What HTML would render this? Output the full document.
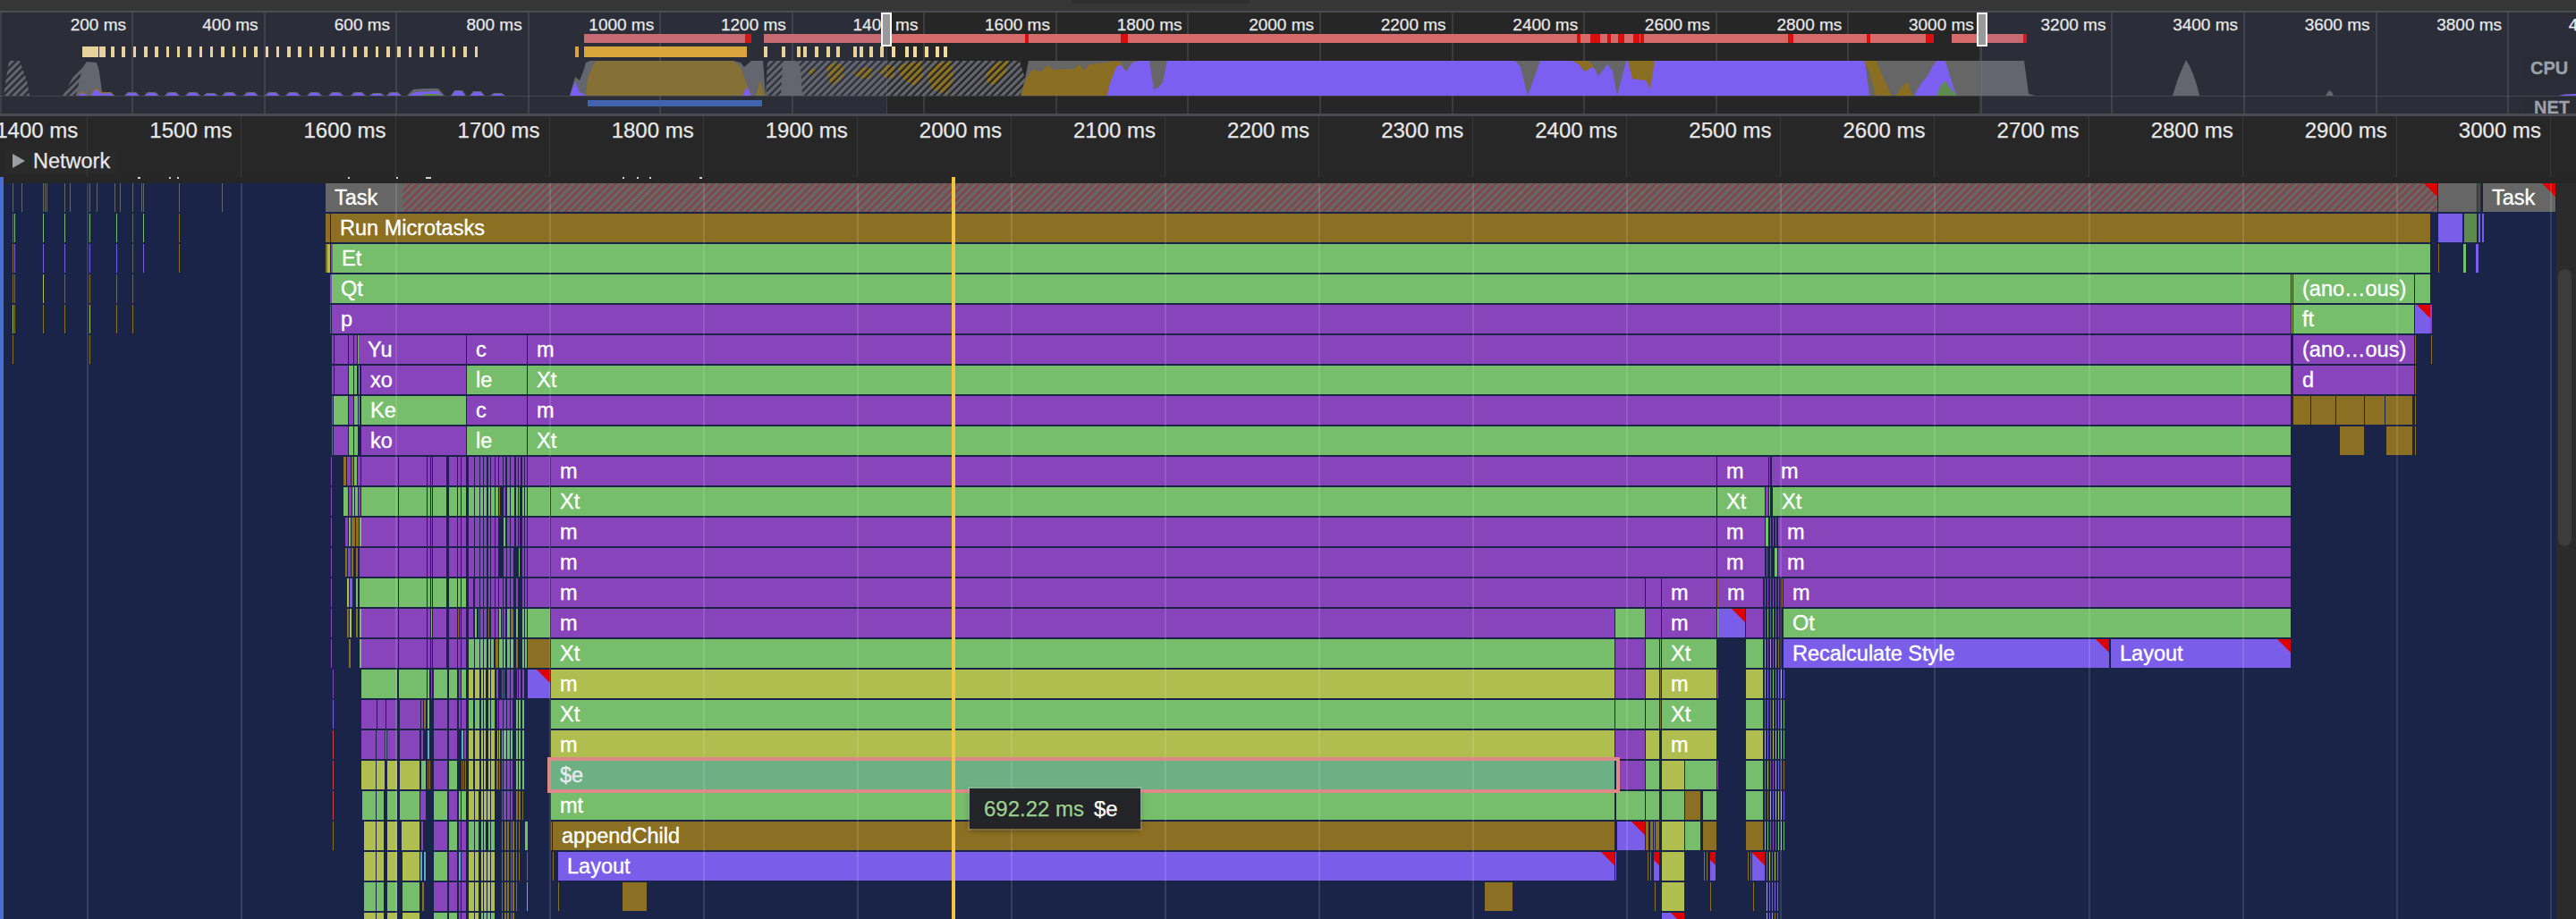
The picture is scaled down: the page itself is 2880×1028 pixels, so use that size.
<!DOCTYPE html>
<html><head><meta charset="utf-8"><style>
html,body{margin:0;padding:0}
body{width:2880px;height:1028px;overflow:hidden;position:relative;background:#192448;font-family:"Liberation Sans",sans-serif}
body>div{position:absolute}
.t{white-space:nowrap;-webkit-text-stroke:0.25px currentColor}
.b{height:32px;overflow:hidden;white-space:nowrap;color:#fff;font-size:23.5px;line-height:32px;box-sizing:border-box}
.l{padding-left:10px;-webkit-text-stroke:0.35px #fff}
.r::after{content:"";position:absolute;right:0;top:0;border-top:15px solid #dd0000;border-left:15px solid transparent}
</style></head><body>
<div style="left:0px;top:0px;width:2880px;height:12px;background:#363636;"></div>
<div style="left:1198px;top:0px;width:199px;height:4px;background:#2f2f2f;border-radius:0 0 5px 5px"></div>
<div style="left:0px;top:12px;width:2880px;height:2px;background:#4b4d52;"></div>
<div style="left:0px;top:14px;width:2880px;height:113px;background:#2b2e38;"></div>
<div style="left:991px;top:14px;width:1224px;height:113px;background:#262626;"></div>
<div style="left:0px;top:14px;width:2px;height:113px;background:#3d4049;"></div>
<div style="left:0px;top:106.5px;width:2880px;height:1.5px;background:rgba(255,255,255,0.11);"></div>
<div style="left:146.5px;top:14px;width:2px;height:113px;background:rgba(255,255,255,0.10);"></div>
<div class="t" style="right:2739.0px;top:16px;font-size:19px;line-height:24px;color:#e8e8e8">200 ms</div>
<div style="left:294.5px;top:14px;width:2px;height:113px;background:rgba(255,255,255,0.10);"></div>
<div class="t" style="right:2591.4px;top:16px;font-size:19px;line-height:24px;color:#e8e8e8">400 ms</div>
<div style="left:441.5px;top:14px;width:2px;height:113px;background:rgba(255,255,255,0.10);"></div>
<div class="t" style="right:2443.9px;top:16px;font-size:19px;line-height:24px;color:#e8e8e8">600 ms</div>
<div style="left:589.5px;top:14px;width:2px;height:113px;background:rgba(255,255,255,0.10);"></div>
<div class="t" style="right:2296.3px;top:16px;font-size:19px;line-height:24px;color:#e8e8e8">800 ms</div>
<div style="left:736.5px;top:14px;width:2px;height:113px;background:rgba(255,255,255,0.10);"></div>
<div class="t" style="right:2148.8px;top:16px;font-size:19px;line-height:24px;color:#e8e8e8">1000 ms</div>
<div style="left:884.5px;top:14px;width:2px;height:113px;background:rgba(255,255,255,0.10);"></div>
<div class="t" style="right:2001.2px;top:16px;font-size:19px;line-height:24px;color:#e8e8e8">1200 ms</div>
<div style="left:1031.5px;top:14px;width:2px;height:113px;background:rgba(255,255,255,0.10);"></div>
<div class="t" style="right:1853.6px;top:16px;font-size:19px;line-height:24px;color:#e8e8e8">1400 ms</div>
<div style="left:1179.5px;top:14px;width:2px;height:113px;background:rgba(255,255,255,0.10);"></div>
<div class="t" style="right:1706.1px;top:16px;font-size:19px;line-height:24px;color:#e8e8e8">1600 ms</div>
<div style="left:1326.5px;top:14px;width:2px;height:113px;background:rgba(255,255,255,0.10);"></div>
<div class="t" style="right:1558.5px;top:16px;font-size:19px;line-height:24px;color:#e8e8e8">1800 ms</div>
<div style="left:1474.5px;top:14px;width:2px;height:113px;background:rgba(255,255,255,0.10);"></div>
<div class="t" style="right:1411.0px;top:16px;font-size:19px;line-height:24px;color:#e8e8e8">2000 ms</div>
<div style="left:1622.5px;top:14px;width:2px;height:113px;background:rgba(255,255,255,0.10);"></div>
<div class="t" style="right:1263.4px;top:16px;font-size:19px;line-height:24px;color:#e8e8e8">2200 ms</div>
<div style="left:1769.5px;top:14px;width:2px;height:113px;background:rgba(255,255,255,0.10);"></div>
<div class="t" style="right:1115.8px;top:16px;font-size:19px;line-height:24px;color:#e8e8e8">2400 ms</div>
<div style="left:1917.5px;top:14px;width:2px;height:113px;background:rgba(255,255,255,0.10);"></div>
<div class="t" style="right:968.3px;top:16px;font-size:19px;line-height:24px;color:#e8e8e8">2600 ms</div>
<div style="left:2064.5px;top:14px;width:2px;height:113px;background:rgba(255,255,255,0.10);"></div>
<div class="t" style="right:820.7px;top:16px;font-size:19px;line-height:24px;color:#e8e8e8">2800 ms</div>
<div style="left:2212.5px;top:14px;width:2px;height:113px;background:rgba(255,255,255,0.10);"></div>
<div class="t" style="right:673.2px;top:16px;font-size:19px;line-height:24px;color:#e8e8e8">3000 ms</div>
<div style="left:2359.5px;top:14px;width:2px;height:113px;background:rgba(255,255,255,0.10);"></div>
<div class="t" style="right:525.6px;top:16px;font-size:19px;line-height:24px;color:#e8e8e8">3200 ms</div>
<div style="left:2507.5px;top:14px;width:2px;height:113px;background:rgba(255,255,255,0.10);"></div>
<div class="t" style="right:378.0px;top:16px;font-size:19px;line-height:24px;color:#e8e8e8">3400 ms</div>
<div style="left:2655.5px;top:14px;width:2px;height:113px;background:rgba(255,255,255,0.10);"></div>
<div class="t" style="right:230.5px;top:16px;font-size:19px;line-height:24px;color:#e8e8e8">3600 ms</div>
<div style="left:2802.5px;top:14px;width:2px;height:113px;background:rgba(255,255,255,0.10);"></div>
<div class="t" style="right:82.9px;top:16px;font-size:19px;line-height:24px;color:#e8e8e8">3800 ms</div>
<div style="left:2950.5px;top:14px;width:2px;height:113px;background:rgba(255,255,255,0.10);"></div>
<div class="t" style="right:-64.6px;top:16px;font-size:19px;line-height:24px;color:#e8e8e8">4000 ms</div>
<div style="left:653px;top:38px;width:180px;height:10px;background:#c76b73;"></div>
<div style="left:833px;top:38px;width:7px;height:10px;background:#d01919;"></div>
<div style="left:854px;top:38px;width:137px;height:10px;background:#c76b73;"></div>
<div style="left:991px;top:38px;width:1170px;height:10px;background:#d46a6a;"></div>
<div style="left:1146px;top:38px;width:4px;height:10px;background:#d70f0f;"></div>
<div style="left:1253px;top:38px;width:8px;height:10px;background:#d70f0f;"></div>
<div style="left:1763px;top:38px;width:4px;height:10px;background:#d70f0f;"></div>
<div style="left:1778px;top:38px;width:11px;height:10px;background:#d70f0f;"></div>
<div style="left:1797px;top:38px;width:4px;height:10px;background:#d70f0f;"></div>
<div style="left:1809px;top:38px;width:7px;height:10px;background:#d70f0f;"></div>
<div style="left:1826px;top:38px;width:7px;height:10px;background:#d70f0f;"></div>
<div style="left:1834px;top:38px;width:4px;height:10px;background:#d70f0f;"></div>
<div style="left:1999px;top:38px;width:6px;height:10px;background:#d70f0f;"></div>
<div style="left:2087px;top:38px;width:4px;height:10px;background:#d70f0f;"></div>
<div style="left:2153px;top:38px;width:9px;height:10px;background:#d70f0f;"></div>
<div style="left:2182px;top:38px;width:33px;height:10px;background:#d46a6a;"></div>
<div style="left:2215px;top:38px;width:47px;height:10px;background:#c76b73;"></div>
<div style="left:2262px;top:38px;width:4px;height:10px;background:#d01919;"></div>
<div style="left:92px;top:52px;width:18px;height:12px;background:#e8d29c;"></div>
<div style="left:111px;top:52px;width:6.6px;height:12px;background:#e8d29c;"></div>
<div style="left:124.0px;top:52px;width:3.6px;height:12px;background:#e8d29c;"></div>
<div style="left:136.3px;top:52px;width:3.6px;height:12px;background:#e8d29c;"></div>
<div style="left:148.6px;top:52px;width:3.6px;height:12px;background:#e8d29c;"></div>
<div style="left:161.0px;top:52px;width:3.6px;height:12px;background:#e8d29c;"></div>
<div style="left:173.3px;top:52px;width:3.6px;height:12px;background:#e8d29c;"></div>
<div style="left:185.6px;top:52px;width:3.6px;height:12px;background:#e8d29c;"></div>
<div style="left:197.9px;top:52px;width:3.6px;height:12px;background:#e8d29c;"></div>
<div style="left:210.2px;top:52px;width:3.6px;height:12px;background:#e8d29c;"></div>
<div style="left:222.6px;top:52px;width:3.6px;height:12px;background:#e8d29c;"></div>
<div style="left:234.9px;top:52px;width:3.6px;height:12px;background:#e8d29c;"></div>
<div style="left:247.2px;top:52px;width:3.6px;height:12px;background:#e8d29c;"></div>
<div style="left:259.5px;top:52px;width:3.6px;height:12px;background:#e8d29c;"></div>
<div style="left:271.8px;top:52px;width:3.6px;height:12px;background:#e8d29c;"></div>
<div style="left:284.2px;top:52px;width:3.6px;height:12px;background:#e8d29c;"></div>
<div style="left:296.5px;top:52px;width:3.6px;height:12px;background:#e8d29c;"></div>
<div style="left:308.8px;top:52px;width:3.6px;height:12px;background:#e8d29c;"></div>
<div style="left:321.1px;top:52px;width:3.6px;height:12px;background:#e8d29c;"></div>
<div style="left:333.4px;top:52px;width:3.6px;height:12px;background:#e8d29c;"></div>
<div style="left:345.8px;top:52px;width:3.6px;height:12px;background:#e8d29c;"></div>
<div style="left:358.1px;top:52px;width:3.6px;height:12px;background:#e8d29c;"></div>
<div style="left:370.4px;top:52px;width:3.6px;height:12px;background:#e8d29c;"></div>
<div style="left:382.7px;top:52px;width:3.6px;height:12px;background:#e8d29c;"></div>
<div style="left:395.0px;top:52px;width:3.6px;height:12px;background:#e8d29c;"></div>
<div style="left:407.4px;top:52px;width:3.6px;height:12px;background:#e8d29c;"></div>
<div style="left:419.7px;top:52px;width:3.6px;height:12px;background:#e8d29c;"></div>
<div style="left:432.0px;top:52px;width:3.6px;height:12px;background:#e8d29c;"></div>
<div style="left:444.3px;top:52px;width:3.6px;height:12px;background:#e8d29c;"></div>
<div style="left:456.6px;top:52px;width:3.6px;height:12px;background:#e8d29c;"></div>
<div style="left:469.0px;top:52px;width:3.6px;height:12px;background:#e8d29c;"></div>
<div style="left:481.3px;top:52px;width:3.6px;height:12px;background:#e8d29c;"></div>
<div style="left:493.6px;top:52px;width:3.6px;height:12px;background:#e8d29c;"></div>
<div style="left:505.9px;top:52px;width:3.6px;height:12px;background:#e8d29c;"></div>
<div style="left:518.2px;top:52px;width:3.6px;height:12px;background:#e8d29c;"></div>
<div style="left:530.6px;top:52px;width:3.6px;height:12px;background:#e8d29c;"></div>
<div style="left:643px;top:52px;width:4px;height:12px;background:#dba53d;"></div>
<div style="left:653px;top:52px;width:182px;height:12px;background:#dba53d;"></div>
<div style="left:853.8px;top:52px;width:4.2px;height:12px;background:#e8d29c;"></div>
<div style="left:874px;top:52px;width:4px;height:12px;background:#e8d29c;"></div>
<div style="left:891px;top:52px;width:4px;height:12px;background:#e8d29c;"></div>
<div style="left:897.6px;top:52px;width:4.4px;height:12px;background:#e8d29c;"></div>
<div style="left:910.8px;top:52px;width:4.2px;height:12px;background:#e8d29c;"></div>
<div style="left:923.8px;top:52px;width:4.2px;height:12px;background:#e8d29c;"></div>
<div style="left:935px;top:52px;width:4px;height:12px;background:#e8d29c;"></div>
<div style="left:954px;top:52px;width:4px;height:12px;background:#e8d29c;"></div>
<div style="left:960.5px;top:52px;width:4.5px;height:12px;background:#e8d29c;"></div>
<div style="left:971.7px;top:52px;width:4.3px;height:12px;background:#e8d29c;"></div>
<div style="left:983.8px;top:52px;width:4.2px;height:12px;background:#e8d29c;"></div>
<div style="left:996.9px;top:52px;width:4.1px;height:12px;background:#f3da9a;"></div>
<div style="left:1011.8px;top:52px;width:4.2px;height:12px;background:#f3da9a;"></div>
<div style="left:1020.7px;top:52px;width:4.3px;height:12px;background:#f3da9a;"></div>
<div style="left:1034px;top:52px;width:4px;height:12px;background:#f3da9a;"></div>
<div style="left:1045.9px;top:52px;width:4.1px;height:12px;background:#f3da9a;"></div>
<div style="left:1054.6px;top:52px;width:4.1px;height:12px;background:#f3da9a;"></div>
<svg style="position:absolute;left:0;top:0" width="2880" height="128" viewBox="0 0 2880 128">
<defs><pattern id="hatch" patternUnits="userSpaceOnUse" width="5.66" height="8" patternTransform="rotate(45)"><rect width="3.0" height="8" fill="#63666e"/></pattern><pattern id="hatchdark" patternUnits="userSpaceOnUse" width="5.66" height="8" patternTransform="rotate(45)"><rect x="3.4" width="2.26" height="8" fill="#2b2e38"/></pattern><pattern id="hatchdark2" patternUnits="userSpaceOnUse" width="5.66" height="8" patternTransform="rotate(45)"><rect x="3.4" width="2.26" height="8" fill="#262626"/></pattern><pattern id="hatch2" patternUnits="userSpaceOnUse" width="8" height="8" patternTransform="rotate(45)"><rect width="4" height="8" fill="#666666"/></pattern></defs>
<polygon fill="url(#hatch)" points="4,107 10,68 22,68 30,90 33,107"/>
<polygon fill="url(#hatch)" points="70,107 84,82 92,75 92,107"/>
<polygon fill="#63666e" points="85,107 92,76 97,69 108,70 111,80 114,103 118,107"/>
<polygon fill="#857035" points="86,107 89,104 92,102 95,104 98,107 102,107 104,101 108,98 112,101 114,103 124,103 128,107"/>
<polygon fill="#7b5ff0" points="86,107 89,105.5 92,104 95,105.5 98,107 102,107 104,103 108,100 112,103 114,104.5 124,104.5 128,107"/>
<polygon fill="#63666e" points="139,107 143,103 152,103 156,107"/>
<polygon fill="#7b5ff0" points="140,107 144,104 151,104 155,107"/>
<polygon fill="#63666e" points="161,107 165,103 174,103 178,107"/>
<polygon fill="#7b5ff0" points="162,107 166,104 173,104 177,107"/>
<polygon fill="#63666e" points="184,107 188,103 197,103 201,107"/>
<polygon fill="#7b5ff0" points="185,107 189,104 196,104 200,107"/>
<polygon fill="#63666e" points="207,107 211,103 220,103 224,107"/>
<polygon fill="#7b5ff0" points="208,107 212,104 219,104 223,107"/>
<polygon fill="#63666e" points="227,107 231,104 240,104 244,107"/>
<polygon fill="#7b5ff0" points="228,107 232,105 239,105 243,107"/>
<polygon fill="#63666e" points="248,107 252,103 261,103 265,107"/>
<polygon fill="#7b5ff0" points="249,107 253,104 260,104 264,107"/>
<polygon fill="#63666e" points="272,107 276,103 285,103 289,107"/>
<polygon fill="#7b5ff0" points="273,107 277,104 284,104 288,107"/>
<polygon fill="#63666e" points="296,107 300,103 309,103 313,107"/>
<polygon fill="#7b5ff0" points="297,107 301,104 308,104 312,107"/>
<polygon fill="#63666e" points="319,107 323,103 332,103 336,107"/>
<polygon fill="#7b5ff0" points="320,107 324,104 331,104 335,107"/>
<polygon fill="#63666e" points="343,107 347,103 356,103 360,107"/>
<polygon fill="#7b5ff0" points="344,107 348,104 355,104 359,107"/>
<polygon fill="#63666e" points="367,107 371,103 380,103 384,107"/>
<polygon fill="#7b5ff0" points="368,107 372,104 379,104 383,107"/>
<polygon fill="#63666e" points="392,107 396,103 405,103 409,107"/>
<polygon fill="#7b5ff0" points="393,107 397,104 404,104 408,107"/>
<polygon fill="#63666e" points="413,107 417,104 426,104 430,107"/>
<polygon fill="#7b5ff0" points="414,107 418,105 425,105 429,107"/>
<polygon fill="#63666e" points="432,107 436,103 445,103 449,107"/>
<polygon fill="#7b5ff0" points="433,107 437,104 444,104 448,107"/>
<polygon fill="#63666e" points="504,107 508,101 517,101 521,107"/>
<polygon fill="#7b5ff0" points="505,107 509,102 516,102 520,107"/>
<polygon fill="#63666e" points="525,107 529,102 538,102 542,107"/>
<polygon fill="#7b5ff0" points="526,107 530,103 537,103 541,107"/>
<polygon fill="#63666e" points="548,107 552,104 561,104 565,107"/>
<polygon fill="#7b5ff0" points="549,107 553,105 560,105 564,107"/>
<polygon fill="#63666e" points="455,107 462,100 475,99 490,99 497,107"/>
<polygon fill="#7b5ff0" points="457,107 464,103 490,102 495,107"/>
<polygon fill="#5f8a52" points="470,107 475,105 490,105 495,107"/>
<polygon fill="#63666e" points="637,107 643,86 648,90 652,80 655,70 660,68 820,68 828,70 832,75 840,68 853,68 856,107"/>
<polygon fill="#857035" points="655,107 657,88 662,75 666,68 820,68 828,75 834,92 840,107"/>
<polygon fill="#7b5ff0" points="637,107 643,91 648,103 656,107"/>
<polygon fill="#7b5ff0" points="830,107 835,97 840,107"/>
<polygon fill="#857035" points="845,107 850,89 855,107"/>
<polygon fill="#63666e" points="856,107 858,68 1140,68 1146,88 1141,107"/>
<polygon fill="#8e7325" points="904,78 908,75 912,80 909,85 905,83"/>
<polygon fill="#8e7325" points="924,74 934,70 943,74 943,85 936,92 929,96 926,86"/>
<polygon fill="#8e7325" points="953,82 962,76 972,75 977,80 972,88 960,87"/>
<polygon fill="#8e7325" points="982,80 990,72 1000,74 1000,86 992,88"/>
<polygon fill="#8e7325" points="1005,74 1015,70 1030,69 1032,85 1024,97 1012,90 1006,84"/>
<polygon fill="#8e7325" points="1038,78 1048,70 1064,69 1066,88 1058,105 1042,100 1038,90"/>
<polygon fill="#8e7325" points="1102,80 1112,70 1127,68 1124,85 1112,96 1104,92"/>
<rect x="857" y="68" width="134" height="39" fill="url(#hatchdark)" />
<rect x="991" y="68" width="160" height="39" fill="url(#hatchdark2)" />
<polygon fill="#63666e" points="873,107 875,72 880,68 890,68 895,75 897,107"/>
<polygon fill="#666666" points="1141,107 1146,88 1150,68 1275,68 1275,107"/>
<polygon fill="#8a6e22" points="1141.5,107 1147,88 1154.5,78 1164,80 1171,73 1177,78 1201,77 1207,72 1212,79 1218,72 1238,70 1248,68 1253,70 1259,80 1266,70 1274,68 1274,107"/>
<polygon fill="#7b5ff0" points="1237.5,107 1242,90 1248,75 1253,72 1259,80 1266,70 1274,68 2085,68 2090,80 2100,107"/>
<polygon fill="#666666" points="1285,68 1290,100 1295,98 1300,92 1305,68"/>
<polygon fill="#666666" points="1694,68 1700,75 1708,107 1716,85 1722,68"/>
<polygon fill="#8a6e22" points="1758,68 1765,72 1772,80 1780,75 1790,80 1795,68"/>
<polygon fill="#666666" points="1775,68 1780,72 1787,85 1795,75 1800,68"/>
<polygon fill="#666666" points="1795,68 1803,80 1808,107 1815,80 1818,68"/>
<polygon fill="#8a6e22" points="1820,68 1825,88 1840,90 1845,99 1850,68"/>
<polygon fill="#666666" points="2085,68 2215,68 2215,107 2090,107"/>
<polygon fill="#63666e" points="2215,68 2263,68 2268,105 2275,107 2215,107"/>
<polygon fill="#8a6e22" points="2084,68 2098,68 2106,88 2115,107 2097,107 2090,80"/>
<polygon fill="#8a6e22" points="2120,107 2128,95 2133,92 2138,107"/>
<polygon fill="#7b5ff0" points="2140,107 2148,93 2155,85 2160,75 2165,68 2175,68 2180,85 2185,100 2188,107"/>
<polygon fill="#5f8a52" points="2165,107 2170,95 2175,90 2180,98 2188,107"/>
<polygon fill="#7b5ff0" points="2860,107 2868,105.5 2880,105 2880,107"/>
<polygon fill="#63666e" points="2600,107 2604,101 2607,103 2609,107"/>
<polygon fill="#63666e" points="2429,107 2435,88 2440,76 2444,67 2448,74 2452,83 2456,95 2459,107"/>
</svg>
<div style="left:657px;top:112px;width:195px;height:7px;background:#4263b0;"></div>
<div style="left:991px;top:14px;width:1px;height:113px;background:rgba(120,140,200,0.25);"></div>
<div style="left:2215px;top:14px;width:1px;height:113px;background:rgba(120,140,200,0.25);"></div>
<div style="left:985px;top:14px;width:12px;height:38px;background:#999999;border:2px solid #fafafa;box-sizing:border-box"></div>
<div style="left:2210px;top:14px;width:12px;height:38px;background:#999999;border:2px solid #fafafa;box-sizing:border-box"></div>
<div style="left:2821px;top:64px;width:59px;height:25px;background:#292c35;"></div>
<div class="t" style="left:2829px;top:64px;font-size:20px;font-weight:bold;line-height:25px;color:#9aa1ab;-webkit-text-stroke:0.3px #9aa1ab">CPU</div>
<div style="left:2823px;top:108px;width:57px;height:19px;background:#292c35;"></div>
<div class="t" style="left:2833px;top:108px;font-size:20px;font-weight:bold;line-height:25px;color:#9aa1ab;height:19px;overflow:hidden;-webkit-text-stroke:0.3px #9aa1ab">NET</div>
<div style="left:0px;top:127px;width:2880px;height:3px;background:#4a4b50;"></div>
<div style="left:0px;top:130px;width:2880px;height:75px;background:#272727;"></div>
<div style="left:6px;top:168px;width:125px;height:26px;background:#2a2a2a;"></div>
<div style="left:97px;top:130px;width:1px;height:68px;background:#3a3a3a;"></div>
<div class="t" style="right:2792.7px;top:131px;font-size:24px;line-height:30px;color:#e8e8e8">1400 ms</div>
<div style="left:269px;top:130px;width:1px;height:68px;background:#3a3a3a;"></div>
<div class="t" style="right:2620.6px;top:131px;font-size:24px;line-height:30px;color:#e8e8e8">1500 ms</div>
<div style="left:442px;top:130px;width:1px;height:68px;background:#3a3a3a;"></div>
<div class="t" style="right:2448.5px;top:131px;font-size:24px;line-height:30px;color:#e8e8e8">1600 ms</div>
<div style="left:614px;top:130px;width:1px;height:68px;background:#3a3a3a;"></div>
<div class="t" style="right:2276.4px;top:131px;font-size:24px;line-height:30px;color:#e8e8e8">1700 ms</div>
<div style="left:786px;top:130px;width:1px;height:68px;background:#3a3a3a;"></div>
<div class="t" style="right:2104.3px;top:131px;font-size:24px;line-height:30px;color:#e8e8e8">1800 ms</div>
<div style="left:958px;top:130px;width:1px;height:68px;background:#3a3a3a;"></div>
<div class="t" style="right:1932.2px;top:131px;font-size:24px;line-height:30px;color:#e8e8e8">1900 ms</div>
<div style="left:1130px;top:130px;width:1px;height:68px;background:#3a3a3a;"></div>
<div class="t" style="right:1760.1px;top:131px;font-size:24px;line-height:30px;color:#e8e8e8">2000 ms</div>
<div style="left:1302px;top:130px;width:1px;height:68px;background:#3a3a3a;"></div>
<div class="t" style="right:1588.0px;top:131px;font-size:24px;line-height:30px;color:#e8e8e8">2100 ms</div>
<div style="left:1474px;top:130px;width:1px;height:68px;background:#3a3a3a;"></div>
<div class="t" style="right:1415.9px;top:131px;font-size:24px;line-height:30px;color:#e8e8e8">2200 ms</div>
<div style="left:1646px;top:130px;width:1px;height:68px;background:#3a3a3a;"></div>
<div class="t" style="right:1243.8px;top:131px;font-size:24px;line-height:30px;color:#e8e8e8">2300 ms</div>
<div style="left:1818px;top:130px;width:1px;height:68px;background:#3a3a3a;"></div>
<div class="t" style="right:1071.7px;top:131px;font-size:24px;line-height:30px;color:#e8e8e8">2400 ms</div>
<div style="left:1990px;top:130px;width:1px;height:68px;background:#3a3a3a;"></div>
<div class="t" style="right:899.6px;top:131px;font-size:24px;line-height:30px;color:#e8e8e8">2500 ms</div>
<div style="left:2162px;top:130px;width:1px;height:68px;background:#3a3a3a;"></div>
<div class="t" style="right:727.5px;top:131px;font-size:24px;line-height:30px;color:#e8e8e8">2600 ms</div>
<div style="left:2335px;top:130px;width:1px;height:68px;background:#3a3a3a;"></div>
<div class="t" style="right:555.4px;top:131px;font-size:24px;line-height:30px;color:#e8e8e8">2700 ms</div>
<div style="left:2507px;top:130px;width:1px;height:68px;background:#3a3a3a;"></div>
<div class="t" style="right:383.3px;top:131px;font-size:24px;line-height:30px;color:#e8e8e8">2800 ms</div>
<div style="left:2679px;top:130px;width:1px;height:68px;background:#3a3a3a;"></div>
<div class="t" style="right:211.2px;top:131px;font-size:24px;line-height:30px;color:#e8e8e8">2900 ms</div>
<div style="left:2851px;top:130px;width:1px;height:68px;background:#3a3a3a;"></div>
<div class="t" style="right:39.1px;top:131px;font-size:24px;line-height:30px;color:#e8e8e8">3000 ms</div>
<svg style="position:absolute;left:13px;top:172px" width="16" height="17"><polygon points="1,0 15,8 1,16" fill="#9ba0a6"/></svg>
<div class="t" style="left:37px;top:165px;font-size:23.5px;line-height:30px;color:#e8e8e8">Network</div>
<div style="left:0px;top:198px;width:2880px;height:7px;background:#262626;"></div>
<div style="left:154px;top:198px;width:3px;height:2px;background:#cfcfcf;"></div>
<div style="left:189px;top:198px;width:2px;height:2px;background:#cfcfcf;"></div>
<div style="left:198px;top:198px;width:2px;height:2px;background:#cfcfcf;"></div>
<div style="left:389px;top:198px;width:2px;height:2px;background:#cfcfcf;"></div>
<div style="left:443px;top:198px;width:2px;height:2px;background:#cfcfcf;"></div>
<div style="left:476px;top:198px;width:6px;height:2px;background:#cfcfcf;"></div>
<div style="left:696px;top:198px;width:2px;height:2px;background:#cfcfcf;"></div>
<div style="left:712px;top:198px;width:2px;height:2px;background:#cfcfcf;"></div>
<div style="left:726px;top:198px;width:2px;height:2px;background:#cfcfcf;"></div>
<div style="left:782px;top:198px;width:3px;height:2px;background:#cfcfcf;"></div>
<div style="left:0px;top:205px;width:2858px;height:823px;background:#192448;"></div>
<div style="left:0px;top:198px;width:4px;height:830px;background:#4a6fd4;"></div>
<div class="b" style="left:14px;top:205px;width:1px;background:#666666;"></div>
<div class="b" style="left:24px;top:205px;width:1px;background:#666666;"></div>
<div class="b" style="left:48px;top:205px;width:1px;background:#666666;"></div>
<div class="b" style="left:50px;top:205px;width:1px;background:#666666;"></div>
<div class="b" style="left:52px;top:205px;width:1px;background:#666666;"></div>
<div class="b" style="left:72px;top:205px;width:1px;background:#666666;"></div>
<div class="b" style="left:78px;top:205px;width:1px;background:#666666;"></div>
<div class="b" style="left:100px;top:205px;width:1px;background:#666666;"></div>
<div class="b" style="left:108px;top:205px;width:1px;background:#666666;"></div>
<div class="b" style="left:128px;top:205px;width:1px;background:#666666;"></div>
<div class="b" style="left:134px;top:205px;width:1px;background:#666666;"></div>
<div class="b" style="left:148px;top:205px;width:1px;background:#666666;"></div>
<div class="b" style="left:158px;top:205px;width:1px;background:#666666;"></div>
<div class="b" style="left:160px;top:205px;width:1px;background:#666666;"></div>
<div class="b" style="left:200px;top:205px;width:1px;background:#666666;"></div>
<div class="b" style="left:248px;top:205px;width:1px;background:#666666;"></div>
<div class="b" style="left:14px;top:239px;width:1px;background:#666666;"></div>
<div class="b" style="left:16px;top:239px;width:1px;background:#77be6c;"></div>
<div class="b" style="left:48px;top:239px;width:1px;background:#77be6c;"></div>
<div class="b" style="left:72px;top:239px;width:1px;background:#77be6c;"></div>
<div class="b" style="left:100px;top:239px;width:1px;background:#77be6c;"></div>
<div class="b" style="left:130px;top:239px;width:1px;background:#77be6c;"></div>
<div class="b" style="left:148px;top:239px;width:1px;background:#666666;"></div>
<div class="b" style="left:160px;top:239px;width:1px;background:#77be6c;"></div>
<div class="b" style="left:200px;top:239px;width:1px;background:#8b6f22;"></div>
<div class="b" style="left:14px;top:273px;width:1px;background:#8b6f22;"></div>
<div class="b" style="left:16px;top:273px;width:1px;background:#7a5eea;"></div>
<div class="b" style="left:48px;top:273px;width:1px;background:#7a5eea;"></div>
<div class="b" style="left:72px;top:273px;width:1px;background:#7a5eea;"></div>
<div class="b" style="left:100px;top:273px;width:1px;background:#7a5eea;"></div>
<div class="b" style="left:130px;top:273px;width:1px;background:#7a5eea;"></div>
<div class="b" style="left:148px;top:273px;width:1px;background:#666666;"></div>
<div class="b" style="left:160px;top:273px;width:1px;background:#7a5eea;"></div>
<div class="b" style="left:200px;top:273px;width:1px;background:#8b6f22;"></div>
<div class="b" style="left:14px;top:307px;width:1px;background:#8b6f22;"></div>
<div class="b" style="left:16px;top:307px;width:1px;background:#666666;"></div>
<div class="b" style="left:48px;top:307px;width:1px;background:#b0be50;"></div>
<div class="b" style="left:72px;top:307px;width:1px;background:#666666;"></div>
<div class="b" style="left:100px;top:307px;width:1px;background:#8b6f22;"></div>
<div class="b" style="left:130px;top:307px;width:1px;background:#666666;"></div>
<div class="b" style="left:148px;top:307px;width:1px;background:#666666;"></div>
<div class="b" style="left:14px;top:341px;width:1px;background:#b0be50;"></div>
<div class="b" style="left:16px;top:341px;width:1px;background:#8b6f22;"></div>
<div class="b" style="left:48px;top:341px;width:1px;background:#8b6f22;"></div>
<div class="b" style="left:72px;top:341px;width:1px;background:#8b6f22;"></div>
<div class="b" style="left:100px;top:341px;width:1px;background:#b0be50;"></div>
<div class="b" style="left:130px;top:341px;width:1px;background:#8b6f22;"></div>
<div class="b" style="left:148px;top:341px;width:1px;background:#8b6f22;"></div>
<div class="b" style="left:14px;top:375px;width:1px;background:#8b6f22;"></div>
<div class="b" style="left:100px;top:375px;width:1px;background:#8b6f22;"></div>
<div class="b l" style="left:364px;top:205px;width:86px;background:#666666;">Task</div>
<div class="b r" style="left:450px;top:205px;width:2275px;background:#666666;background:repeating-linear-gradient(-45deg,#686666 0 3.2px,#7f4949 3.2px 6px)"></div>
<div class="b" style="left:2726px;top:205px;width:43px;background:#666666;"></div>
<div class="b" style="left:2770px;top:205px;width:1px;background:#666666;"></div>
<div class="b" style="left:2772px;top:205px;width:1px;background:#666666;"></div>
<div class="b r l" style="left:2776px;top:205px;width:81px;background:#666666;">Task</div>
<div class="b" style="left:364px;top:239px;width:5px;background:#8b6f22;"></div>
<div class="b l" style="left:370px;top:239px;width:2347px;background:#8b6f22;">Run Microtasks</div>
<div class="b" style="left:2726px;top:239px;width:27px;background:#7a5eea;"></div>
<div class="b" style="left:2755px;top:239px;width:14px;background:#5f8a4e;"></div>
<div class="b" style="left:2771px;top:239px;width:2px;background:#7a5eea;"></div>
<div class="b" style="left:2775px;top:239px;width:2px;background:#7a5eea;"></div>
<div class="b" style="left:364px;top:273px;width:2px;background:#8b6f22;"></div>
<div class="b" style="left:366px;top:273px;width:3px;background:#b0be50;"></div>
<div class="b" style="left:369.5px;top:273px;width:2.0px;background:#8844bb;"></div>
<div class="b l" style="left:372px;top:273px;width:2345px;background:#77be6c;">Et</div>
<div class="b" style="left:2726px;top:273px;width:1px;background:#8b6f22;"></div>
<div class="b" style="left:2754px;top:273px;width:3px;background:#77be6c;"></div>
<div class="b" style="left:2768px;top:273px;width:3px;background:#7a5eea;"></div>
<div class="b" style="left:369px;top:307px;width:2px;background:#8844bb;"></div>
<div class="b l" style="left:371px;top:307px;width:2190px;background:#77be6c;">Qt</div>
<div class="b" style="left:2562px;top:307px;width:1px;background:#b0be50;"></div>
<div class="b l" style="left:2564px;top:307px;width:135px;background:#77be6c;">(ano…ous)</div>
<div class="b" style="left:2700px;top:307px;width:17px;background:#77be6c;"></div>
<div class="b" style="left:369px;top:341px;width:1px;background:#8844bb;"></div>
<div class="b l" style="left:371px;top:341px;width:2190px;background:#8844bb;">p</div>
<div class="b" style="left:2562px;top:341px;width:1px;background:#b0be50;"></div>
<div class="b l" style="left:2564px;top:341px;width:135px;background:#77be6c;">ft</div>
<div class="b r" style="left:2700px;top:341px;width:17px;background:#7a5eea;"></div>
<div class="b" style="left:2717px;top:341px;width:2px;background:#8844bb;"></div>
<div class="b" style="left:371px;top:375px;width:2px;background:#8844bb;"></div>
<div class="b" style="left:374px;top:375px;width:15px;background:#8844bb;"></div>
<div class="b" style="left:390px;top:375px;width:5px;background:#8844bb;"></div>
<div class="b" style="left:396px;top:375px;width:3px;background:#8844bb;"></div>
<div class="b" style="left:400px;top:375px;width:1px;background:#77be6c;"></div>
<div class="b l" style="left:401px;top:375px;width:120px;background:#8844bb;">Yu</div>
<div class="b l" style="left:522px;top:375px;width:67px;background:#8844bb;">c</div>
<div class="b l" style="left:590px;top:375px;width:1971px;background:#8844bb;">m</div>
<div class="b l" style="left:2564px;top:375px;width:135px;background:#8844bb;">(ano…ous)</div>
<div class="b" style="left:2700px;top:375px;width:1px;background:#8b6f22;"></div>
<div class="b" style="left:2718px;top:375px;width:1px;background:#8b6f22;"></div>
<div class="b" style="left:371px;top:409px;width:1.5px;background:#8844bb;"></div>
<div class="b" style="left:374px;top:409px;width:15px;background:#8844bb;"></div>
<div class="b" style="left:389.5px;top:409px;width:5.5px;background:#77be6c;"></div>
<div class="b" style="left:396px;top:409px;width:3px;background:#77be6c;"></div>
<div class="b" style="left:401px;top:409px;width:1px;background:#77be6c;"></div>
<div class="b l" style="left:404px;top:409px;width:117px;background:#8844bb;">xo</div>
<div class="b l" style="left:522px;top:409px;width:67px;background:#77be6c;">le</div>
<div class="b l" style="left:590px;top:409px;width:1971px;background:#77be6c;">Xt</div>
<div class="b l" style="left:2564px;top:409px;width:135px;background:#8844bb;">d</div>
<div class="b" style="left:2700px;top:409px;width:1px;background:#8b6f22;"></div>
<div class="b" style="left:371px;top:443px;width:1px;background:#8b6f22;"></div>
<div class="b" style="left:373px;top:443px;width:16px;background:#77be6c;"></div>
<div class="b" style="left:390px;top:443px;width:5px;background:#8844bb;"></div>
<div class="b" style="left:396px;top:443px;width:4px;background:#77be6c;"></div>
<div class="b" style="left:401px;top:443px;width:1px;background:#77be6c;"></div>
<div class="b l" style="left:404px;top:443px;width:117px;background:#77be6c;">Ke</div>
<div class="b l" style="left:522px;top:443px;width:67px;background:#8844bb;">c</div>
<div class="b l" style="left:590px;top:443px;width:1971px;background:#8844bb;">m</div>
<div class="b" style="left:2564px;top:443px;width:19px;background:#8b6f22;"></div>
<div class="b" style="left:2584px;top:443px;width:27px;background:#8b6f22;"></div>
<div class="b" style="left:2612px;top:443px;width:31px;background:#8b6f22;"></div>
<div class="b" style="left:2644px;top:443px;width:22px;background:#8b6f22;"></div>
<div class="b" style="left:2667px;top:443px;width:30px;background:#8b6f22;"></div>
<div class="b" style="left:2700px;top:443px;width:1px;background:#8b6f22;"></div>
<div class="b" style="left:371px;top:477px;width:1px;background:#8b6f22;"></div>
<div class="b" style="left:373px;top:477px;width:16px;background:#8844bb;"></div>
<div class="b" style="left:390px;top:477px;width:5px;background:#77be6c;"></div>
<div class="b" style="left:396px;top:477px;width:4px;background:#77be6c;"></div>
<div class="b l" style="left:404px;top:477px;width:117px;background:#8844bb;">ko</div>
<div class="b l" style="left:522px;top:477px;width:67px;background:#77be6c;">le</div>
<div class="b l" style="left:590px;top:477px;width:1971px;background:#77be6c;">Xt</div>
<div class="b" style="left:2616px;top:477px;width:27px;background:#8b6f22;"></div>
<div class="b" style="left:2668px;top:477px;width:29px;background:#8b6f22;"></div>
<div class="b" style="left:2700px;top:477px;width:1px;background:#8b6f22;"></div>
<div class="b" style="left:404px;top:511px;width:41px;background:#8844bb;"></div>
<div class="b" style="left:446px;top:511px;width:31px;background:#8844bb;"></div>
<div class="b" style="left:478px;top:511px;width:5px;background:#8844bb;"></div>
<div class="b" style="left:484px;top:511px;width:15px;background:#8844bb;"></div>
<div class="b" style="left:500px;top:511px;width:1px;background:#8b6f22;"></div>
<div class="b" style="left:501.5px;top:511px;width:19.5px;background:#8844bb;"></div>
<div class="b" style="left:522.5px;top:511px;width:22.5px;background:#8844bb;"></div>
<div class="b" style="left:546px;top:511px;width:11px;background:#8844bb;"></div>
<div class="b" style="left:558px;top:511px;width:7px;background:#8844bb;"></div>
<div class="b" style="left:566px;top:511px;width:9px;background:#8844bb;"></div>
<div class="b" style="left:576px;top:511px;width:13px;background:#8844bb;"></div>
<div class="b" style="left:590px;top:511px;width:25px;background:#8844bb;"></div>
<div class="b" style="left:404px;top:545px;width:41px;background:#77be6c;"></div>
<div class="b" style="left:446px;top:545px;width:31px;background:#77be6c;"></div>
<div class="b" style="left:478px;top:545px;width:5px;background:#77be6c;"></div>
<div class="b" style="left:484px;top:545px;width:15px;background:#77be6c;"></div>
<div class="b" style="left:500px;top:545px;width:1px;background:#8844bb;"></div>
<div class="b" style="left:501.5px;top:545px;width:19.5px;background:#77be6c;"></div>
<div class="b" style="left:522.5px;top:545px;width:22.5px;background:#77be6c;"></div>
<div class="b" style="left:546px;top:545px;width:11px;background:#77be6c;"></div>
<div class="b" style="left:558px;top:545px;width:1px;background:#8b6f22;"></div>
<div class="b" style="left:562px;top:545px;width:3px;background:#8844bb;"></div>
<div class="b" style="left:566px;top:545px;width:15px;background:#77be6c;"></div>
<div class="b" style="left:584px;top:545px;width:5px;background:#77be6c;"></div>
<div class="b" style="left:590px;top:545px;width:25px;background:#77be6c;"></div>
<div class="b" style="left:404px;top:579px;width:41px;background:#8844bb;"></div>
<div class="b" style="left:446px;top:579px;width:31px;background:#8844bb;"></div>
<div class="b" style="left:478px;top:579px;width:5px;background:#8844bb;"></div>
<div class="b" style="left:484px;top:579px;width:15px;background:#8844bb;"></div>
<div class="b" style="left:500px;top:579px;width:1px;background:#77be6c;"></div>
<div class="b" style="left:501.5px;top:579px;width:19.5px;background:#8844bb;"></div>
<div class="b" style="left:522.5px;top:579px;width:22.5px;background:#8844bb;"></div>
<div class="b" style="left:546px;top:579px;width:11px;background:#8844bb;"></div>
<div class="b" style="left:562px;top:579px;width:3px;background:#77be6c;"></div>
<div class="b" style="left:566px;top:579px;width:15px;background:#8844bb;"></div>
<div class="b" style="left:584px;top:579px;width:5px;background:#8844bb;"></div>
<div class="b" style="left:590px;top:579px;width:25px;background:#8844bb;"></div>
<div class="b" style="left:404px;top:613px;width:41px;background:#8844bb;"></div>
<div class="b" style="left:446px;top:613px;width:31px;background:#8844bb;"></div>
<div class="b" style="left:478px;top:613px;width:5px;background:#8844bb;"></div>
<div class="b" style="left:484px;top:613px;width:15px;background:#8844bb;"></div>
<div class="b" style="left:502px;top:613px;width:9px;background:#8844bb;"></div>
<div class="b" style="left:512px;top:613px;width:3px;background:#8844bb;"></div>
<div class="b" style="left:516px;top:613px;width:5px;background:#8844bb;"></div>
<div class="b" style="left:522.5px;top:613px;width:22.5px;background:#8844bb;"></div>
<div class="b" style="left:546px;top:613px;width:11px;background:#8844bb;"></div>
<div class="b" style="left:562px;top:613px;width:12px;background:#8844bb;"></div>
<div class="b" style="left:580px;top:613px;width:1px;background:#77be6c;"></div>
<div class="b" style="left:584px;top:613px;width:5px;background:#8844bb;"></div>
<div class="b" style="left:590px;top:613px;width:25px;background:#8844bb;"></div>
<div class="b" style="left:404px;top:647px;width:41px;background:#77be6c;"></div>
<div class="b" style="left:446px;top:647px;width:31px;background:#77be6c;"></div>
<div class="b" style="left:478px;top:647px;width:5px;background:#77be6c;"></div>
<div class="b" style="left:484px;top:647px;width:15px;background:#77be6c;"></div>
<div class="b" style="left:502px;top:647px;width:9px;background:#77be6c;"></div>
<div class="b" style="left:512px;top:647px;width:3px;background:#77be6c;"></div>
<div class="b" style="left:516px;top:647px;width:5px;background:#77be6c;"></div>
<div class="b" style="left:522px;top:647px;width:7px;background:#8844bb;"></div>
<div class="b" style="left:530px;top:647px;width:6px;background:#8844bb;"></div>
<div class="b" style="left:537px;top:647px;width:8px;background:#8844bb;"></div>
<div class="b" style="left:546px;top:647px;width:11px;background:#8844bb;"></div>
<div class="b" style="left:558px;top:647px;width:7px;background:#8844bb;"></div>
<div class="b" style="left:566px;top:647px;width:8px;background:#8844bb;"></div>
<div class="b" style="left:576px;top:647px;width:4px;background:#8844bb;"></div>
<div class="b" style="left:583px;top:647px;width:6px;background:#8844bb;"></div>
<div class="b" style="left:590px;top:647px;width:25px;background:#8844bb;"></div>
<div class="b" style="left:404px;top:681px;width:41px;background:#8844bb;"></div>
<div class="b" style="left:446px;top:681px;width:31px;background:#8844bb;"></div>
<div class="b" style="left:478px;top:681px;width:3px;background:#8844bb;"></div>
<div class="b" style="left:481.5px;top:681px;width:1.5px;background:#77be6c;"></div>
<div class="b" style="left:484px;top:681px;width:15px;background:#8844bb;"></div>
<div class="b" style="left:502px;top:681px;width:9px;background:#8844bb;"></div>
<div class="b" style="left:512px;top:681px;width:1px;background:#8b6f22;"></div>
<div class="b" style="left:514px;top:681px;width:7px;background:#8844bb;"></div>
<div class="b" style="left:522px;top:681px;width:1px;background:#77be6c;"></div>
<div class="b" style="left:523.5px;top:681px;width:5.5px;background:#8844bb;"></div>
<div class="b" style="left:530px;top:681px;width:3px;background:#77be6c;"></div>
<div class="b" style="left:535px;top:681px;width:10px;background:#8844bb;"></div>
<div class="b" style="left:546px;top:681px;width:1px;background:#8b6f22;"></div>
<div class="b" style="left:548px;top:681px;width:9px;background:#8844bb;"></div>
<div class="b" style="left:558px;top:681px;width:2px;background:#77be6c;"></div>
<div class="b" style="left:561px;top:681px;width:4px;background:#8844bb;"></div>
<div class="b" style="left:566px;top:681px;width:4px;background:#77be6c;"></div>
<div class="b" style="left:571px;top:681px;width:3px;background:#8b6f22;"></div>
<div class="b" style="left:576px;top:681px;width:4px;background:#77be6c;"></div>
<div class="b" style="left:583px;top:681px;width:6px;background:#77be6c;"></div>
<div class="b" style="left:590px;top:681px;width:25px;background:#77be6c;"></div>
<div class="b" style="left:404px;top:715px;width:41px;background:#8844bb;"></div>
<div class="b" style="left:446px;top:715px;width:31px;background:#8844bb;"></div>
<div class="b" style="left:478px;top:715px;width:5px;background:#8844bb;"></div>
<div class="b" style="left:484px;top:715px;width:15px;background:#8844bb;"></div>
<div class="b" style="left:502px;top:715px;width:9px;background:#8844bb;"></div>
<div class="b" style="left:512px;top:715px;width:9px;background:#8844bb;"></div>
<div class="b" style="left:522px;top:715px;width:1px;background:#8b6f22;"></div>
<div class="b" style="left:523.5px;top:715px;width:21.5px;background:#77be6c;"></div>
<div class="b" style="left:546px;top:715px;width:6px;background:#77be6c;"></div>
<div class="b" style="left:553px;top:715px;width:4px;background:#8b6f22;"></div>
<div class="b" style="left:558px;top:715px;width:7px;background:#77be6c;"></div>
<div class="b" style="left:566px;top:715px;width:8px;background:#77be6c;"></div>
<div class="b" style="left:576px;top:715px;width:4px;background:#8b6f22;"></div>
<div class="b" style="left:583px;top:715px;width:3px;background:#77be6c;"></div>
<div class="b" style="left:587px;top:715px;width:2px;background:#77be6c;"></div>
<div class="b" style="left:590px;top:715px;width:25px;background:#8b6f22;"></div>
<div class="b" style="left:370px;top:511px;width:1px;background:#8844bb;"></div>
<div class="b" style="left:384px;top:511px;width:3px;background:#8b6f22;"></div>
<div class="b" style="left:388px;top:511px;width:4px;background:#8844bb;"></div>
<div class="b" style="left:393px;top:511px;width:2px;background:#8b6f22;"></div>
<div class="b" style="left:396px;top:511px;width:3px;background:#77be6c;"></div>
<div class="b" style="left:400px;top:511px;width:3px;background:#8844bb;"></div>
<div class="b" style="left:370px;top:545px;width:1px;background:#8844bb;"></div>
<div class="b" style="left:384px;top:545px;width:5px;background:#77be6c;"></div>
<div class="b" style="left:390px;top:545px;width:3px;background:#8844bb;"></div>
<div class="b" style="left:394px;top:545px;width:2px;background:#77be6c;"></div>
<div class="b" style="left:397px;top:545px;width:3px;background:#77be6c;"></div>
<div class="b" style="left:401px;top:545px;width:2px;background:#8844bb;"></div>
<div class="b" style="left:370px;top:579px;width:1px;background:#8844bb;"></div>
<div class="b" style="left:386px;top:579px;width:3px;background:#8844bb;"></div>
<div class="b" style="left:390px;top:579px;width:2px;background:#77be6c;"></div>
<div class="b" style="left:393px;top:579px;width:4px;background:#8b6f22;"></div>
<div class="b" style="left:398px;top:579px;width:3px;background:#8b6f22;"></div>
<div class="b" style="left:402px;top:579px;width:2px;background:#77be6c;"></div>
<div class="b" style="left:370px;top:613px;width:1px;background:#8844bb;"></div>
<div class="b" style="left:386px;top:613px;width:2px;background:#8b6f22;"></div>
<div class="b" style="left:389px;top:613px;width:3px;background:#8844bb;"></div>
<div class="b" style="left:393px;top:613px;width:2px;background:#8b6f22;"></div>
<div class="b" style="left:398px;top:613px;width:2px;background:#8b6f22;"></div>
<div class="b" style="left:402px;top:613px;width:2px;background:#8844bb;"></div>
<div class="b" style="left:370px;top:647px;width:1px;background:#8844bb;"></div>
<div class="b" style="left:388px;top:647px;width:2px;background:#b0be50;"></div>
<div class="b" style="left:391px;top:647px;width:3px;background:#7a5eea;"></div>
<div class="b" style="left:398px;top:647px;width:2px;background:#77be6c;"></div>
<div class="b" style="left:402px;top:647px;width:2px;background:#77be6c;"></div>
<div class="b" style="left:370px;top:681px;width:1px;background:#8844bb;"></div>
<div class="b" style="left:388px;top:681px;width:2px;background:#8b6f22;"></div>
<div class="b" style="left:391px;top:681px;width:2px;background:#b0be50;"></div>
<div class="b" style="left:398px;top:681px;width:2px;background:#8b6f22;"></div>
<div class="b" style="left:402px;top:681px;width:2px;background:#77be6c;"></div>
<div class="b" style="left:370px;top:715px;width:1px;background:#8844bb;"></div>
<div class="b" style="left:390px;top:715px;width:2px;background:#8b6f22;"></div>
<div class="b" style="left:402px;top:715px;width:2px;background:#77be6c;"></div>
<div class="b l" style="left:616px;top:511px;width:1303px;background:#8844bb;">m</div>
<div class="b l" style="left:1920px;top:511px;width:57px;background:#8844bb;">m</div>
<div class="b" style="left:1978px;top:511px;width:1px;background:#8844bb;"></div>
<div class="b l" style="left:1981px;top:511px;width:580px;background:#8844bb;">m</div>
<div class="b l" style="left:616px;top:545px;width:1303px;background:#77be6c;">Xt</div>
<div class="b l" style="left:1920px;top:545px;width:53px;background:#77be6c;">Xt</div>
<div class="b" style="left:1973.5px;top:545px;width:3.5px;background:#8844bb;"></div>
<div class="b" style="left:1978px;top:545px;width:1px;background:#77be6c;"></div>
<div class="b l" style="left:1982px;top:545px;width:579px;background:#77be6c;">Xt</div>
<div class="b l" style="left:616px;top:579px;width:1303px;background:#8844bb;">m</div>
<div class="b l" style="left:1920px;top:579px;width:53px;background:#8844bb;">m</div>
<div class="b" style="left:1974px;top:579px;width:3px;background:#77be6c;"></div>
<div class="b" style="left:1979px;top:579px;width:1px;background:#8844bb;"></div>
<div class="b" style="left:1982px;top:579px;width:1px;background:#8844bb;"></div>
<div class="b" style="left:1985px;top:579px;width:1px;background:#8844bb;"></div>
<div class="b l" style="left:1988px;top:579px;width:573px;background:#8844bb;">m</div>
<div class="b l" style="left:616px;top:613px;width:1303px;background:#8844bb;">m</div>
<div class="b l" style="left:1920px;top:613px;width:53px;background:#8844bb;">m</div>
<div class="b" style="left:1975px;top:613px;width:1px;background:#8844bb;"></div>
<div class="b" style="left:1979px;top:613px;width:1px;background:#8844bb;"></div>
<div class="b" style="left:1984px;top:613px;width:3px;background:#77be6c;"></div>
<div class="b l" style="left:1988px;top:613px;width:573px;background:#8844bb;">m</div>
<div class="b l" style="left:616px;top:647px;width:1223px;background:#8844bb;">m</div>
<div class="b" style="left:1840px;top:647px;width:17px;background:#8844bb;"></div>
<div class="b l" style="left:1858px;top:647px;width:61px;background:#8844bb;">m</div>
<div class="b" style="left:1920px;top:647px;width:1px;background:#8b6f22;"></div>
<div class="b l" style="left:1921px;top:647px;width:50px;background:#8844bb;">m</div>
<div class="b" style="left:1973px;top:647px;width:1px;background:#8844bb;"></div>
<div class="b" style="left:1976px;top:647px;width:1px;background:#8844bb;"></div>
<div class="b" style="left:1979px;top:647px;width:1px;background:#8844bb;"></div>
<div class="b" style="left:1982px;top:647px;width:1px;background:#8844bb;"></div>
<div class="b" style="left:1985px;top:647px;width:1px;background:#8844bb;"></div>
<div class="b" style="left:1988px;top:647px;width:1px;background:#8844bb;"></div>
<div class="b" style="left:1992px;top:647px;width:1px;background:#8b6f22;"></div>
<div class="b l" style="left:1994px;top:647px;width:567px;background:#8844bb;">m</div>
<div class="b l" style="left:616px;top:681px;width:1189px;background:#8844bb;">m</div>
<div class="b" style="left:1806px;top:681px;width:33px;background:#77be6c;"></div>
<div class="b" style="left:1840px;top:681px;width:17px;background:#8844bb;"></div>
<div class="b l" style="left:1858px;top:681px;width:61px;background:#8844bb;">m</div>
<div class="b" style="left:1920px;top:681px;width:1px;background:#77be6c;"></div>
<div class="b r" style="left:1921px;top:681px;width:30px;background:#7a5eea;"></div>
<div class="b" style="left:1952px;top:681px;width:19px;background:#8844bb;"></div>
<div class="b" style="left:1973px;top:681px;width:1px;background:#8844bb;"></div>
<div class="b" style="left:1976px;top:681px;width:1px;background:#77be6c;"></div>
<div class="b" style="left:1979px;top:681px;width:1px;background:#8844bb;"></div>
<div class="b" style="left:1982px;top:681px;width:1px;background:#77be6c;"></div>
<div class="b" style="left:1985px;top:681px;width:1px;background:#8844bb;"></div>
<div class="b" style="left:1988px;top:681px;width:1px;background:#8844bb;"></div>
<div class="b l" style="left:1994px;top:681px;width:567px;background:#77be6c;">Ot</div>
<div class="b l" style="left:616px;top:715px;width:1189px;background:#77be6c;">Xt</div>
<div class="b" style="left:1806px;top:715px;width:33px;background:#8844bb;"></div>
<div class="b" style="left:1840px;top:715px;width:15px;background:#77be6c;"></div>
<div class="b" style="left:1856px;top:715px;width:1px;background:#77be6c;"></div>
<div class="b l" style="left:1858px;top:715px;width:61px;background:#77be6c;">Xt</div>
<div class="b" style="left:1952px;top:715px;width:19px;background:#77be6c;"></div>
<div class="b" style="left:1973px;top:715px;width:1px;background:#77be6c;"></div>
<div class="b" style="left:1976px;top:715px;width:1px;background:#8844bb;"></div>
<div class="b" style="left:1979px;top:715px;width:1px;background:#77be6c;"></div>
<div class="b" style="left:1982px;top:715px;width:1px;background:#8844bb;"></div>
<div class="b" style="left:1985px;top:715px;width:1px;background:#77be6c;"></div>
<div class="b" style="left:1988px;top:715px;width:1px;background:#8b6f22;"></div>
<div class="b r l" style="left:1994px;top:715px;width:364px;background:#7a5eea;">Recalculate Style</div>
<div class="b r l" style="left:2360px;top:715px;width:201px;background:#7a5eea;">Layout</div>
<div class="b" style="left:404px;top:749px;width:40px;background:#77be6c;"></div>
<div class="b" style="left:446px;top:749px;width:31px;background:#77be6c;"></div>
<div class="b" style="left:478px;top:749px;width:2px;background:#77be6c;"></div>
<div class="b" style="left:481px;top:749px;width:2px;background:#8844bb;"></div>
<div class="b" style="left:485px;top:749px;width:15px;background:#77be6c;"></div>
<div class="b" style="left:502px;top:749px;width:10px;background:#77be6c;"></div>
<div class="b" style="left:513px;top:749px;width:2px;background:#8844bb;"></div>
<div class="b" style="left:516px;top:749px;width:5px;background:#77be6c;"></div>
<div class="b" style="left:524px;top:749px;width:5px;background:#b0be50;"></div>
<div class="b" style="left:531px;top:749px;width:5px;background:#b0be50;"></div>
<div class="b" style="left:538px;top:749px;width:5px;background:#b0be50;"></div>
<div class="b" style="left:546px;top:749px;width:7px;background:#b0be50;"></div>
<div class="b" style="left:555px;top:749px;width:3px;background:#8844bb;"></div>
<div class="b" style="left:561px;top:749px;width:3px;background:#8844bb;"></div>
<div class="b" style="left:566px;top:749px;width:8px;background:#8844bb;"></div>
<div class="b" style="left:578px;top:749px;width:9px;background:#8844bb;"></div>
<div class="b" style="left:404px;top:783px;width:17px;background:#8844bb;"></div>
<div class="b" style="left:422px;top:783px;width:9px;background:#8844bb;"></div>
<div class="b" style="left:432px;top:783px;width:12px;background:#8844bb;"></div>
<div class="b" style="left:447px;top:783px;width:23px;background:#8844bb;"></div>
<div class="b" style="left:471px;top:783px;width:2px;background:#8844bb;"></div>
<div class="b" style="left:474px;top:783px;width:2px;background:#8b6f22;"></div>
<div class="b" style="left:478px;top:783px;width:2px;background:#77be6c;"></div>
<div class="b" style="left:485px;top:783px;width:15px;background:#8844bb;"></div>
<div class="b" style="left:502px;top:783px;width:10px;background:#8844bb;"></div>
<div class="b" style="left:513px;top:783px;width:8px;background:#8844bb;"></div>
<div class="b" style="left:524px;top:783px;width:5px;background:#77be6c;"></div>
<div class="b" style="left:531px;top:783px;width:5px;background:#77be6c;"></div>
<div class="b" style="left:538px;top:783px;width:5px;background:#77be6c;"></div>
<div class="b" style="left:546px;top:783px;width:7px;background:#77be6c;"></div>
<div class="b" style="left:556px;top:783px;width:17px;background:#8844bb;"></div>
<div class="b" style="left:577px;top:783px;width:10px;background:#77be6c;"></div>
<div class="b" style="left:404px;top:817px;width:16px;background:#8844bb;"></div>
<div class="b" style="left:421px;top:817px;width:9px;background:#8844bb;"></div>
<div class="b" style="left:431px;top:817px;width:1px;background:#5fa9c9;"></div>
<div class="b" style="left:433px;top:817px;width:11px;background:#8844bb;"></div>
<div class="b" style="left:447px;top:817px;width:22px;background:#8844bb;"></div>
<div class="b" style="left:471px;top:817px;width:2px;background:#8844bb;"></div>
<div class="b" style="left:477px;top:817px;width:3px;background:#5fa9c9;"></div>
<div class="b" style="left:485px;top:817px;width:15px;background:#8844bb;"></div>
<div class="b" style="left:502px;top:817px;width:10px;background:#8844bb;"></div>
<div class="b" style="left:516px;top:817px;width:2px;background:#5fa9c9;"></div>
<div class="b" style="left:519px;top:817px;width:2px;background:#8844bb;"></div>
<div class="b" style="left:524px;top:817px;width:5px;background:#b0be50;"></div>
<div class="b" style="left:531px;top:817px;width:5px;background:#b0be50;"></div>
<div class="b" style="left:538px;top:817px;width:5px;background:#b0be50;"></div>
<div class="b" style="left:546px;top:817px;width:7px;background:#b0be50;"></div>
<div class="b" style="left:556px;top:817px;width:3px;background:#b0be50;"></div>
<div class="b" style="left:561px;top:817px;width:12px;background:#77be6c;"></div>
<div class="b" style="left:577px;top:817px;width:10px;background:#77be6c;"></div>
<div class="b" style="left:404px;top:851px;width:16px;background:#b0be50;"></div>
<div class="b" style="left:421px;top:851px;width:9px;background:#b0be50;"></div>
<div class="b" style="left:433px;top:851px;width:11px;background:#b0be50;"></div>
<div class="b" style="left:447px;top:851px;width:22px;background:#b0be50;"></div>
<div class="b" style="left:471px;top:851px;width:5px;background:#77be6c;"></div>
<div class="b" style="left:477px;top:851px;width:2px;background:#8b6f22;"></div>
<div class="b" style="left:480px;top:851px;width:2px;background:#8b6f22;"></div>
<div class="b" style="left:485px;top:851px;width:15px;background:#8844bb;"></div>
<div class="b" style="left:502px;top:851px;width:10px;background:#77be6c;"></div>
<div class="b" style="left:516px;top:851px;width:1px;background:#8b6f22;"></div>
<div class="b" style="left:518px;top:851px;width:1px;background:#8b6f22;"></div>
<div class="b" style="left:520px;top:851px;width:1px;background:#8b6f22;"></div>
<div class="b" style="left:524px;top:851px;width:5px;background:#b0be50;"></div>
<div class="b" style="left:531px;top:851px;width:5px;background:#b0be50;"></div>
<div class="b" style="left:538px;top:851px;width:5px;background:#b0be50;"></div>
<div class="b" style="left:546px;top:851px;width:7px;background:#b0be50;"></div>
<div class="b" style="left:555px;top:851px;width:4px;background:#8b6f22;"></div>
<div class="b" style="left:561px;top:851px;width:12px;background:#8844bb;"></div>
<div class="b" style="left:577px;top:851px;width:10px;background:#77be6c;"></div>
<div class="b" style="left:405px;top:885px;width:15px;background:#77be6c;"></div>
<div class="b" style="left:421px;top:885px;width:8px;background:#77be6c;"></div>
<div class="b" style="left:433px;top:885px;width:11px;background:#77be6c;"></div>
<div class="b" style="left:447px;top:885px;width:22px;background:#77be6c;"></div>
<div class="b" style="left:470px;top:885px;width:6px;background:#8844bb;"></div>
<div class="b" style="left:485px;top:885px;width:15px;background:#77be6c;"></div>
<div class="b" style="left:502px;top:885px;width:10px;background:#8844bb;"></div>
<div class="b" style="left:513px;top:885px;width:8px;background:#77be6c;"></div>
<div class="b" style="left:524px;top:885px;width:11px;background:#b0be50;"></div>
<div class="b" style="left:538px;top:885px;width:15px;background:#b0be50;"></div>
<div class="b" style="left:561px;top:885px;width:12px;background:#8844bb;"></div>
<div class="b" style="left:577px;top:885px;width:8px;background:#8b6f22;"></div>
<div class="b" style="left:407px;top:919px;width:13px;background:#b0be50;"></div>
<div class="b" style="left:421px;top:919px;width:8px;background:#b0be50;"></div>
<div class="b" style="left:433px;top:919px;width:11px;background:#b0be50;"></div>
<div class="b" style="left:449px;top:919px;width:20px;background:#b0be50;"></div>
<div class="b" style="left:471px;top:919px;width:2px;background:#8844bb;"></div>
<div class="b" style="left:485px;top:919px;width:15px;background:#8844bb;"></div>
<div class="b" style="left:502px;top:919px;width:10px;background:#77be6c;"></div>
<div class="b" style="left:513px;top:919px;width:8px;background:#8844bb;"></div>
<div class="b" style="left:524px;top:919px;width:11px;background:#77be6c;"></div>
<div class="b" style="left:538px;top:919px;width:5px;background:#77be6c;"></div>
<div class="b" style="left:546px;top:919px;width:7px;background:#77be6c;"></div>
<div class="b" style="left:561px;top:919px;width:24px;background:#8b6f22;background:repeating-linear-gradient(90deg,#8b6f22 0 2px,#192448 2px 3px)"></div>
<div class="b" style="left:587px;top:919px;width:3px;background:#77be6c;"></div>
<div class="b" style="left:407px;top:953px;width:13px;background:#b0be50;"></div>
<div class="b" style="left:421px;top:953px;width:8px;background:#b0be50;"></div>
<div class="b" style="left:433px;top:953px;width:11px;background:#b0be50;"></div>
<div class="b" style="left:450px;top:953px;width:19px;background:#b0be50;"></div>
<div class="b" style="left:470px;top:953px;width:2px;background:#5fa9c9;"></div>
<div class="b" style="left:474px;top:953px;width:2px;background:#5fa9c9;"></div>
<div class="b" style="left:485px;top:953px;width:15px;background:#77be6c;"></div>
<div class="b" style="left:502px;top:953px;width:10px;background:#8844bb;"></div>
<div class="b" style="left:513px;top:953px;width:2px;background:#5fa9c9;"></div>
<div class="b" style="left:516px;top:953px;width:5px;background:#8844bb;"></div>
<div class="b" style="left:524px;top:953px;width:11px;background:#b0be50;"></div>
<div class="b" style="left:538px;top:953px;width:15px;background:#b0be50;"></div>
<div class="b" style="left:561px;top:953px;width:22px;background:#8b6f22;background:repeating-linear-gradient(90deg,#8b6f22 0 2px,#192448 2px 3px)"></div>
<div class="b" style="left:589px;top:953px;width:1px;background:#8844bb;"></div>
<div class="b" style="left:407px;top:987px;width:13px;background:#77be6c;"></div>
<div class="b" style="left:421px;top:987px;width:8px;background:#77be6c;"></div>
<div class="b" style="left:433px;top:987px;width:11px;background:#77be6c;"></div>
<div class="b" style="left:450px;top:987px;width:19px;background:#77be6c;"></div>
<div class="b" style="left:472px;top:987px;width:2px;background:#8b6f22;"></div>
<div class="b" style="left:485px;top:987px;width:15px;background:#8844bb;"></div>
<div class="b" style="left:502px;top:987px;width:10px;background:#8844bb;"></div>
<div class="b" style="left:513px;top:987px;width:8px;background:#8844bb;"></div>
<div class="b" style="left:524px;top:987px;width:11px;background:#b0be50;"></div>
<div class="b" style="left:538px;top:987px;width:15px;background:#b0be50;"></div>
<div class="b" style="left:561px;top:987px;width:17px;background:#8b6f22;background:repeating-linear-gradient(90deg,#8b6f22 0 2px,#192448 2px 3px)"></div>
<div class="b" style="left:589px;top:987px;width:1px;background:#77be6c;"></div>
<div class="b" style="left:407px;top:1021px;width:13px;background:#b0be50;"></div>
<div class="b" style="left:421px;top:1021px;width:8px;background:#b0be50;"></div>
<div class="b" style="left:433px;top:1021px;width:11px;background:#b0be50;"></div>
<div class="b" style="left:450px;top:1021px;width:19px;background:#b0be50;"></div>
<div class="b" style="left:485px;top:1021px;width:15px;background:#77be6c;"></div>
<div class="b" style="left:502px;top:1021px;width:10px;background:#77be6c;"></div>
<div class="b" style="left:513px;top:1021px;width:8px;background:#8844bb;"></div>
<div class="b" style="left:524px;top:1021px;width:11px;background:#b0be50;"></div>
<div class="b" style="left:538px;top:1021px;width:15px;background:#77be6c;"></div>
<div class="b" style="left:561px;top:1021px;width:14px;background:#8b6f22;background:repeating-linear-gradient(90deg,#8b6f22 0 2px,#192448 2px 3px)"></div>
<div class="b" style="left:477px;top:511px;width:1px;background:#192448;"></div>
<div class="b" style="left:481px;top:511px;width:1px;background:#192448;"></div>
<div class="b" style="left:499.5px;top:511px;width:2.0px;background:#192448;"></div>
<div class="b" style="left:511px;top:511px;width:1px;background:#192448;"></div>
<div class="b" style="left:515px;top:511px;width:1px;background:#192448;"></div>
<div class="b" style="left:522px;top:511px;width:1.5px;background:#192448;"></div>
<div class="b" style="left:530px;top:511px;width:1px;background:#192448;"></div>
<div class="b" style="left:536px;top:511px;width:1px;background:#192448;"></div>
<div class="b" style="left:540px;top:511px;width:1px;background:#192448;"></div>
<div class="b" style="left:544px;top:511px;width:1px;background:#192448;"></div>
<div class="b" style="left:548px;top:511px;width:1px;background:#192448;"></div>
<div class="b" style="left:553px;top:511px;width:1px;background:#192448;"></div>
<div class="b" style="left:557px;top:511px;width:1px;background:#192448;"></div>
<div class="b" style="left:562px;top:511px;width:1px;background:#192448;"></div>
<div class="b" style="left:566px;top:511px;width:1px;background:#192448;"></div>
<div class="b" style="left:570px;top:511px;width:1px;background:#192448;"></div>
<div class="b" style="left:575px;top:511px;width:1.5px;background:#192448;"></div>
<div class="b" style="left:579px;top:511px;width:1px;background:#192448;"></div>
<div class="b" style="left:582px;top:511px;width:1.5px;background:#192448;"></div>
<div class="b" style="left:586px;top:511px;width:1px;background:#192448;"></div>
<div class="b" style="left:477px;top:545px;width:1px;background:#192448;"></div>
<div class="b" style="left:481px;top:545px;width:1px;background:#192448;"></div>
<div class="b" style="left:499.5px;top:545px;width:2.0px;background:#192448;"></div>
<div class="b" style="left:511px;top:545px;width:1px;background:#192448;"></div>
<div class="b" style="left:515px;top:545px;width:1px;background:#192448;"></div>
<div class="b" style="left:522px;top:545px;width:1.5px;background:#192448;"></div>
<div class="b" style="left:530px;top:545px;width:1px;background:#192448;"></div>
<div class="b" style="left:536px;top:545px;width:1px;background:#192448;"></div>
<div class="b" style="left:540px;top:545px;width:1px;background:#192448;"></div>
<div class="b" style="left:544px;top:545px;width:1px;background:#192448;"></div>
<div class="b" style="left:548px;top:545px;width:1px;background:#192448;"></div>
<div class="b" style="left:553px;top:545px;width:1px;background:#192448;"></div>
<div class="b" style="left:557px;top:545px;width:1px;background:#192448;"></div>
<div class="b" style="left:562px;top:545px;width:1px;background:#192448;"></div>
<div class="b" style="left:566px;top:545px;width:1px;background:#192448;"></div>
<div class="b" style="left:570px;top:545px;width:1px;background:#192448;"></div>
<div class="b" style="left:575px;top:545px;width:1.5px;background:#192448;"></div>
<div class="b" style="left:579px;top:545px;width:1px;background:#192448;"></div>
<div class="b" style="left:582px;top:545px;width:1.5px;background:#192448;"></div>
<div class="b" style="left:586px;top:545px;width:1px;background:#192448;"></div>
<div class="b" style="left:477px;top:579px;width:1px;background:#192448;"></div>
<div class="b" style="left:481px;top:579px;width:1px;background:#192448;"></div>
<div class="b" style="left:499.5px;top:579px;width:2.0px;background:#192448;"></div>
<div class="b" style="left:511px;top:579px;width:1px;background:#192448;"></div>
<div class="b" style="left:515px;top:579px;width:1px;background:#192448;"></div>
<div class="b" style="left:522px;top:579px;width:1.5px;background:#192448;"></div>
<div class="b" style="left:530px;top:579px;width:1px;background:#192448;"></div>
<div class="b" style="left:536px;top:579px;width:1px;background:#192448;"></div>
<div class="b" style="left:540px;top:579px;width:1px;background:#192448;"></div>
<div class="b" style="left:544px;top:579px;width:1px;background:#192448;"></div>
<div class="b" style="left:548px;top:579px;width:1px;background:#192448;"></div>
<div class="b" style="left:553px;top:579px;width:1px;background:#192448;"></div>
<div class="b" style="left:557px;top:579px;width:1px;background:#192448;"></div>
<div class="b" style="left:562px;top:579px;width:1px;background:#192448;"></div>
<div class="b" style="left:566px;top:579px;width:1px;background:#192448;"></div>
<div class="b" style="left:570px;top:579px;width:1px;background:#192448;"></div>
<div class="b" style="left:575px;top:579px;width:1.5px;background:#192448;"></div>
<div class="b" style="left:579px;top:579px;width:1px;background:#192448;"></div>
<div class="b" style="left:582px;top:579px;width:1.5px;background:#192448;"></div>
<div class="b" style="left:586px;top:579px;width:1px;background:#192448;"></div>
<div class="b" style="left:477px;top:613px;width:1px;background:#192448;"></div>
<div class="b" style="left:481px;top:613px;width:1px;background:#192448;"></div>
<div class="b" style="left:499.5px;top:613px;width:2.0px;background:#192448;"></div>
<div class="b" style="left:511px;top:613px;width:1px;background:#192448;"></div>
<div class="b" style="left:515px;top:613px;width:1px;background:#192448;"></div>
<div class="b" style="left:522px;top:613px;width:1.5px;background:#192448;"></div>
<div class="b" style="left:530px;top:613px;width:1px;background:#192448;"></div>
<div class="b" style="left:536px;top:613px;width:1px;background:#192448;"></div>
<div class="b" style="left:540px;top:613px;width:1px;background:#192448;"></div>
<div class="b" style="left:544px;top:613px;width:1px;background:#192448;"></div>
<div class="b" style="left:548px;top:613px;width:1px;background:#192448;"></div>
<div class="b" style="left:553px;top:613px;width:1px;background:#192448;"></div>
<div class="b" style="left:557px;top:613px;width:1px;background:#192448;"></div>
<div class="b" style="left:562px;top:613px;width:1px;background:#192448;"></div>
<div class="b" style="left:566px;top:613px;width:1px;background:#192448;"></div>
<div class="b" style="left:570px;top:613px;width:1px;background:#192448;"></div>
<div class="b" style="left:575px;top:613px;width:1.5px;background:#192448;"></div>
<div class="b" style="left:579px;top:613px;width:1px;background:#192448;"></div>
<div class="b" style="left:582px;top:613px;width:1.5px;background:#192448;"></div>
<div class="b" style="left:586px;top:613px;width:1px;background:#192448;"></div>
<div class="b" style="left:477px;top:647px;width:1px;background:#192448;"></div>
<div class="b" style="left:481px;top:647px;width:1px;background:#192448;"></div>
<div class="b" style="left:499.5px;top:647px;width:2.0px;background:#192448;"></div>
<div class="b" style="left:511px;top:647px;width:1px;background:#192448;"></div>
<div class="b" style="left:515px;top:647px;width:1px;background:#192448;"></div>
<div class="b" style="left:522px;top:647px;width:1.5px;background:#192448;"></div>
<div class="b" style="left:530px;top:647px;width:1px;background:#192448;"></div>
<div class="b" style="left:536px;top:647px;width:1px;background:#192448;"></div>
<div class="b" style="left:540px;top:647px;width:1px;background:#192448;"></div>
<div class="b" style="left:544px;top:647px;width:1px;background:#192448;"></div>
<div class="b" style="left:548px;top:647px;width:1px;background:#192448;"></div>
<div class="b" style="left:553px;top:647px;width:1px;background:#192448;"></div>
<div class="b" style="left:557px;top:647px;width:1px;background:#192448;"></div>
<div class="b" style="left:562px;top:647px;width:1px;background:#192448;"></div>
<div class="b" style="left:566px;top:647px;width:1px;background:#192448;"></div>
<div class="b" style="left:570px;top:647px;width:1px;background:#192448;"></div>
<div class="b" style="left:575px;top:647px;width:1.5px;background:#192448;"></div>
<div class="b" style="left:579px;top:647px;width:1px;background:#192448;"></div>
<div class="b" style="left:582px;top:647px;width:1.5px;background:#192448;"></div>
<div class="b" style="left:586px;top:647px;width:1px;background:#192448;"></div>
<div class="b" style="left:477px;top:681px;width:1px;background:#192448;"></div>
<div class="b" style="left:481px;top:681px;width:1px;background:#192448;"></div>
<div class="b" style="left:499.5px;top:681px;width:2.0px;background:#192448;"></div>
<div class="b" style="left:511px;top:681px;width:1px;background:#192448;"></div>
<div class="b" style="left:515px;top:681px;width:1px;background:#192448;"></div>
<div class="b" style="left:522px;top:681px;width:1.5px;background:#192448;"></div>
<div class="b" style="left:530px;top:681px;width:1px;background:#192448;"></div>
<div class="b" style="left:536px;top:681px;width:1px;background:#192448;"></div>
<div class="b" style="left:540px;top:681px;width:1px;background:#192448;"></div>
<div class="b" style="left:544px;top:681px;width:1px;background:#192448;"></div>
<div class="b" style="left:548px;top:681px;width:1px;background:#192448;"></div>
<div class="b" style="left:553px;top:681px;width:1px;background:#192448;"></div>
<div class="b" style="left:557px;top:681px;width:1px;background:#192448;"></div>
<div class="b" style="left:562px;top:681px;width:1px;background:#192448;"></div>
<div class="b" style="left:566px;top:681px;width:1px;background:#192448;"></div>
<div class="b" style="left:570px;top:681px;width:1px;background:#192448;"></div>
<div class="b" style="left:575px;top:681px;width:1.5px;background:#192448;"></div>
<div class="b" style="left:579px;top:681px;width:1px;background:#192448;"></div>
<div class="b" style="left:582px;top:681px;width:1.5px;background:#192448;"></div>
<div class="b" style="left:586px;top:681px;width:1px;background:#192448;"></div>
<div class="b" style="left:477px;top:715px;width:1px;background:#192448;"></div>
<div class="b" style="left:481px;top:715px;width:1px;background:#192448;"></div>
<div class="b" style="left:499.5px;top:715px;width:2.0px;background:#192448;"></div>
<div class="b" style="left:511px;top:715px;width:1px;background:#192448;"></div>
<div class="b" style="left:515px;top:715px;width:1px;background:#192448;"></div>
<div class="b" style="left:522px;top:715px;width:1.5px;background:#192448;"></div>
<div class="b" style="left:530px;top:715px;width:1px;background:#192448;"></div>
<div class="b" style="left:536px;top:715px;width:1px;background:#192448;"></div>
<div class="b" style="left:540px;top:715px;width:1px;background:#192448;"></div>
<div class="b" style="left:544px;top:715px;width:1px;background:#192448;"></div>
<div class="b" style="left:548px;top:715px;width:1px;background:#192448;"></div>
<div class="b" style="left:553px;top:715px;width:1px;background:#192448;"></div>
<div class="b" style="left:557px;top:715px;width:1px;background:#192448;"></div>
<div class="b" style="left:562px;top:715px;width:1px;background:#192448;"></div>
<div class="b" style="left:566px;top:715px;width:1px;background:#192448;"></div>
<div class="b" style="left:570px;top:715px;width:1px;background:#192448;"></div>
<div class="b" style="left:575px;top:715px;width:1.5px;background:#192448;"></div>
<div class="b" style="left:579px;top:715px;width:1px;background:#192448;"></div>
<div class="b" style="left:582px;top:715px;width:1.5px;background:#192448;"></div>
<div class="b" style="left:586px;top:715px;width:1px;background:#192448;"></div>
<div class="b" style="left:477px;top:749px;width:1px;background:#192448;"></div>
<div class="b" style="left:481px;top:749px;width:1px;background:#192448;"></div>
<div class="b" style="left:499.5px;top:749px;width:2.0px;background:#192448;"></div>
<div class="b" style="left:511px;top:749px;width:1px;background:#192448;"></div>
<div class="b" style="left:515px;top:749px;width:1px;background:#192448;"></div>
<div class="b" style="left:522px;top:749px;width:1.5px;background:#192448;"></div>
<div class="b" style="left:530px;top:749px;width:1px;background:#192448;"></div>
<div class="b" style="left:536px;top:749px;width:1px;background:#192448;"></div>
<div class="b" style="left:540px;top:749px;width:1px;background:#192448;"></div>
<div class="b" style="left:544px;top:749px;width:1px;background:#192448;"></div>
<div class="b" style="left:548px;top:749px;width:1px;background:#192448;"></div>
<div class="b" style="left:553px;top:749px;width:1px;background:#192448;"></div>
<div class="b" style="left:557px;top:749px;width:1px;background:#192448;"></div>
<div class="b" style="left:562px;top:749px;width:1px;background:#192448;"></div>
<div class="b" style="left:566px;top:749px;width:1px;background:#192448;"></div>
<div class="b" style="left:570px;top:749px;width:1px;background:#192448;"></div>
<div class="b" style="left:575px;top:749px;width:1.5px;background:#192448;"></div>
<div class="b" style="left:579px;top:749px;width:1px;background:#192448;"></div>
<div class="b" style="left:582px;top:749px;width:1.5px;background:#192448;"></div>
<div class="b" style="left:586px;top:749px;width:1px;background:#192448;"></div>
<div class="b" style="left:477px;top:783px;width:1px;background:#192448;"></div>
<div class="b" style="left:481px;top:783px;width:1px;background:#192448;"></div>
<div class="b" style="left:499.5px;top:783px;width:2.0px;background:#192448;"></div>
<div class="b" style="left:511px;top:783px;width:1px;background:#192448;"></div>
<div class="b" style="left:515px;top:783px;width:1px;background:#192448;"></div>
<div class="b" style="left:522px;top:783px;width:1.5px;background:#192448;"></div>
<div class="b" style="left:530px;top:783px;width:1px;background:#192448;"></div>
<div class="b" style="left:536px;top:783px;width:1px;background:#192448;"></div>
<div class="b" style="left:540px;top:783px;width:1px;background:#192448;"></div>
<div class="b" style="left:544px;top:783px;width:1px;background:#192448;"></div>
<div class="b" style="left:548px;top:783px;width:1px;background:#192448;"></div>
<div class="b" style="left:553px;top:783px;width:1px;background:#192448;"></div>
<div class="b" style="left:557px;top:783px;width:1px;background:#192448;"></div>
<div class="b" style="left:562px;top:783px;width:1px;background:#192448;"></div>
<div class="b" style="left:566px;top:783px;width:1px;background:#192448;"></div>
<div class="b" style="left:570px;top:783px;width:1px;background:#192448;"></div>
<div class="b" style="left:575px;top:783px;width:1.5px;background:#192448;"></div>
<div class="b" style="left:579px;top:783px;width:1px;background:#192448;"></div>
<div class="b" style="left:582px;top:783px;width:1.5px;background:#192448;"></div>
<div class="b" style="left:586px;top:783px;width:1px;background:#192448;"></div>
<div class="b" style="left:477px;top:817px;width:1px;background:#192448;"></div>
<div class="b" style="left:481px;top:817px;width:1px;background:#192448;"></div>
<div class="b" style="left:499.5px;top:817px;width:2.0px;background:#192448;"></div>
<div class="b" style="left:511px;top:817px;width:1px;background:#192448;"></div>
<div class="b" style="left:515px;top:817px;width:1px;background:#192448;"></div>
<div class="b" style="left:522px;top:817px;width:1.5px;background:#192448;"></div>
<div class="b" style="left:530px;top:817px;width:1px;background:#192448;"></div>
<div class="b" style="left:536px;top:817px;width:1px;background:#192448;"></div>
<div class="b" style="left:540px;top:817px;width:1px;background:#192448;"></div>
<div class="b" style="left:544px;top:817px;width:1px;background:#192448;"></div>
<div class="b" style="left:548px;top:817px;width:1px;background:#192448;"></div>
<div class="b" style="left:553px;top:817px;width:1px;background:#192448;"></div>
<div class="b" style="left:557px;top:817px;width:1px;background:#192448;"></div>
<div class="b" style="left:562px;top:817px;width:1px;background:#192448;"></div>
<div class="b" style="left:566px;top:817px;width:1px;background:#192448;"></div>
<div class="b" style="left:570px;top:817px;width:1px;background:#192448;"></div>
<div class="b" style="left:575px;top:817px;width:1.5px;background:#192448;"></div>
<div class="b" style="left:579px;top:817px;width:1px;background:#192448;"></div>
<div class="b" style="left:582px;top:817px;width:1.5px;background:#192448;"></div>
<div class="b" style="left:586px;top:817px;width:1px;background:#192448;"></div>
<div class="b" style="left:477px;top:851px;width:1px;background:#192448;"></div>
<div class="b" style="left:481px;top:851px;width:1px;background:#192448;"></div>
<div class="b" style="left:499.5px;top:851px;width:2.0px;background:#192448;"></div>
<div class="b" style="left:511px;top:851px;width:1px;background:#192448;"></div>
<div class="b" style="left:515px;top:851px;width:1px;background:#192448;"></div>
<div class="b" style="left:522px;top:851px;width:1.5px;background:#192448;"></div>
<div class="b" style="left:530px;top:851px;width:1px;background:#192448;"></div>
<div class="b" style="left:536px;top:851px;width:1px;background:#192448;"></div>
<div class="b" style="left:540px;top:851px;width:1px;background:#192448;"></div>
<div class="b" style="left:544px;top:851px;width:1px;background:#192448;"></div>
<div class="b" style="left:548px;top:851px;width:1px;background:#192448;"></div>
<div class="b" style="left:553px;top:851px;width:1px;background:#192448;"></div>
<div class="b" style="left:557px;top:851px;width:1px;background:#192448;"></div>
<div class="b" style="left:562px;top:851px;width:1px;background:#192448;"></div>
<div class="b" style="left:566px;top:851px;width:1px;background:#192448;"></div>
<div class="b" style="left:570px;top:851px;width:1px;background:#192448;"></div>
<div class="b" style="left:575px;top:851px;width:1.5px;background:#192448;"></div>
<div class="b" style="left:579px;top:851px;width:1px;background:#192448;"></div>
<div class="b" style="left:582px;top:851px;width:1.5px;background:#192448;"></div>
<div class="b" style="left:586px;top:851px;width:1px;background:#192448;"></div>
<div class="b" style="left:477px;top:885px;width:1px;background:#192448;"></div>
<div class="b" style="left:481px;top:885px;width:1px;background:#192448;"></div>
<div class="b" style="left:499.5px;top:885px;width:2.0px;background:#192448;"></div>
<div class="b" style="left:511px;top:885px;width:1px;background:#192448;"></div>
<div class="b" style="left:515px;top:885px;width:1px;background:#192448;"></div>
<div class="b" style="left:522px;top:885px;width:1.5px;background:#192448;"></div>
<div class="b" style="left:530px;top:885px;width:1px;background:#192448;"></div>
<div class="b" style="left:536px;top:885px;width:1px;background:#192448;"></div>
<div class="b" style="left:540px;top:885px;width:1px;background:#192448;"></div>
<div class="b" style="left:544px;top:885px;width:1px;background:#192448;"></div>
<div class="b" style="left:548px;top:885px;width:1px;background:#192448;"></div>
<div class="b" style="left:553px;top:885px;width:1px;background:#192448;"></div>
<div class="b" style="left:557px;top:885px;width:1px;background:#192448;"></div>
<div class="b" style="left:562px;top:885px;width:1px;background:#192448;"></div>
<div class="b" style="left:566px;top:885px;width:1px;background:#192448;"></div>
<div class="b" style="left:570px;top:885px;width:1px;background:#192448;"></div>
<div class="b" style="left:575px;top:885px;width:1.5px;background:#192448;"></div>
<div class="b" style="left:579px;top:885px;width:1px;background:#192448;"></div>
<div class="b" style="left:582px;top:885px;width:1.5px;background:#192448;"></div>
<div class="b" style="left:586px;top:885px;width:1px;background:#192448;"></div>
<div class="b" style="left:477px;top:919px;width:1px;background:#192448;"></div>
<div class="b" style="left:481px;top:919px;width:1px;background:#192448;"></div>
<div class="b" style="left:499.5px;top:919px;width:2.0px;background:#192448;"></div>
<div class="b" style="left:511px;top:919px;width:1px;background:#192448;"></div>
<div class="b" style="left:515px;top:919px;width:1px;background:#192448;"></div>
<div class="b" style="left:522px;top:919px;width:1.5px;background:#192448;"></div>
<div class="b" style="left:530px;top:919px;width:1px;background:#192448;"></div>
<div class="b" style="left:536px;top:919px;width:1px;background:#192448;"></div>
<div class="b" style="left:540px;top:919px;width:1px;background:#192448;"></div>
<div class="b" style="left:544px;top:919px;width:1px;background:#192448;"></div>
<div class="b" style="left:548px;top:919px;width:1px;background:#192448;"></div>
<div class="b" style="left:553px;top:919px;width:1px;background:#192448;"></div>
<div class="b" style="left:557px;top:919px;width:1px;background:#192448;"></div>
<div class="b" style="left:562px;top:919px;width:1px;background:#192448;"></div>
<div class="b" style="left:566px;top:919px;width:1px;background:#192448;"></div>
<div class="b" style="left:570px;top:919px;width:1px;background:#192448;"></div>
<div class="b" style="left:575px;top:919px;width:1.5px;background:#192448;"></div>
<div class="b" style="left:579px;top:919px;width:1px;background:#192448;"></div>
<div class="b" style="left:582px;top:919px;width:1.5px;background:#192448;"></div>
<div class="b" style="left:586px;top:919px;width:1px;background:#192448;"></div>
<div class="b" style="left:477px;top:953px;width:1px;background:#192448;"></div>
<div class="b" style="left:481px;top:953px;width:1px;background:#192448;"></div>
<div class="b" style="left:499.5px;top:953px;width:2.0px;background:#192448;"></div>
<div class="b" style="left:511px;top:953px;width:1px;background:#192448;"></div>
<div class="b" style="left:515px;top:953px;width:1px;background:#192448;"></div>
<div class="b" style="left:522px;top:953px;width:1.5px;background:#192448;"></div>
<div class="b" style="left:530px;top:953px;width:1px;background:#192448;"></div>
<div class="b" style="left:536px;top:953px;width:1px;background:#192448;"></div>
<div class="b" style="left:540px;top:953px;width:1px;background:#192448;"></div>
<div class="b" style="left:544px;top:953px;width:1px;background:#192448;"></div>
<div class="b" style="left:548px;top:953px;width:1px;background:#192448;"></div>
<div class="b" style="left:553px;top:953px;width:1px;background:#192448;"></div>
<div class="b" style="left:557px;top:953px;width:1px;background:#192448;"></div>
<div class="b" style="left:562px;top:953px;width:1px;background:#192448;"></div>
<div class="b" style="left:566px;top:953px;width:1px;background:#192448;"></div>
<div class="b" style="left:570px;top:953px;width:1px;background:#192448;"></div>
<div class="b" style="left:575px;top:953px;width:1.5px;background:#192448;"></div>
<div class="b" style="left:579px;top:953px;width:1px;background:#192448;"></div>
<div class="b" style="left:582px;top:953px;width:1.5px;background:#192448;"></div>
<div class="b" style="left:586px;top:953px;width:1px;background:#192448;"></div>
<div class="b" style="left:477px;top:987px;width:1px;background:#192448;"></div>
<div class="b" style="left:481px;top:987px;width:1px;background:#192448;"></div>
<div class="b" style="left:499.5px;top:987px;width:2.0px;background:#192448;"></div>
<div class="b" style="left:511px;top:987px;width:1px;background:#192448;"></div>
<div class="b" style="left:515px;top:987px;width:1px;background:#192448;"></div>
<div class="b" style="left:522px;top:987px;width:1.5px;background:#192448;"></div>
<div class="b" style="left:530px;top:987px;width:1px;background:#192448;"></div>
<div class="b" style="left:536px;top:987px;width:1px;background:#192448;"></div>
<div class="b" style="left:540px;top:987px;width:1px;background:#192448;"></div>
<div class="b" style="left:544px;top:987px;width:1px;background:#192448;"></div>
<div class="b" style="left:548px;top:987px;width:1px;background:#192448;"></div>
<div class="b" style="left:553px;top:987px;width:1px;background:#192448;"></div>
<div class="b" style="left:557px;top:987px;width:1px;background:#192448;"></div>
<div class="b" style="left:562px;top:987px;width:1px;background:#192448;"></div>
<div class="b" style="left:566px;top:987px;width:1px;background:#192448;"></div>
<div class="b" style="left:570px;top:987px;width:1px;background:#192448;"></div>
<div class="b" style="left:575px;top:987px;width:1.5px;background:#192448;"></div>
<div class="b" style="left:579px;top:987px;width:1px;background:#192448;"></div>
<div class="b" style="left:582px;top:987px;width:1.5px;background:#192448;"></div>
<div class="b" style="left:586px;top:987px;width:1px;background:#192448;"></div>
<div class="b" style="left:477px;top:1021px;width:1px;background:#192448;"></div>
<div class="b" style="left:481px;top:1021px;width:1px;background:#192448;"></div>
<div class="b" style="left:499.5px;top:1021px;width:2.0px;background:#192448;"></div>
<div class="b" style="left:511px;top:1021px;width:1px;background:#192448;"></div>
<div class="b" style="left:515px;top:1021px;width:1px;background:#192448;"></div>
<div class="b" style="left:522px;top:1021px;width:1.5px;background:#192448;"></div>
<div class="b" style="left:530px;top:1021px;width:1px;background:#192448;"></div>
<div class="b" style="left:536px;top:1021px;width:1px;background:#192448;"></div>
<div class="b" style="left:540px;top:1021px;width:1px;background:#192448;"></div>
<div class="b" style="left:544px;top:1021px;width:1px;background:#192448;"></div>
<div class="b" style="left:548px;top:1021px;width:1px;background:#192448;"></div>
<div class="b" style="left:553px;top:1021px;width:1px;background:#192448;"></div>
<div class="b" style="left:557px;top:1021px;width:1px;background:#192448;"></div>
<div class="b" style="left:562px;top:1021px;width:1px;background:#192448;"></div>
<div class="b" style="left:566px;top:1021px;width:1px;background:#192448;"></div>
<div class="b" style="left:570px;top:1021px;width:1px;background:#192448;"></div>
<div class="b" style="left:575px;top:1021px;width:1.5px;background:#192448;"></div>
<div class="b" style="left:579px;top:1021px;width:1px;background:#192448;"></div>
<div class="b" style="left:582px;top:1021px;width:1.5px;background:#192448;"></div>
<div class="b" style="left:586px;top:1021px;width:1px;background:#192448;"></div>
<div class="b" style="left:372px;top:749px;width:1px;background:#8844bb;"></div>
<div class="b" style="left:372px;top:783px;width:1px;background:#7a5eea;"></div>
<div class="b" style="left:372px;top:817px;width:1px;background:#d04040;"></div>
<div class="b" style="left:372px;top:851px;width:1px;background:#d04040;"></div>
<div class="b" style="left:372px;top:885px;width:1px;background:#d04040;"></div>
<div class="b" style="left:372px;top:919px;width:1px;background:#8b6f22;"></div>
<div class="b r" style="left:590px;top:749px;width:25px;background:#7a5eea;"></div>
<div class="b l" style="left:616px;top:749px;width:1189px;background:#b0be50;">m</div>
<div class="b" style="left:1806px;top:749px;width:33px;background:#8844bb;"></div>
<div class="b" style="left:1840px;top:749px;width:15px;background:#b0be50;"></div>
<div class="b" style="left:1856px;top:749px;width:1px;background:#8b6f22;"></div>
<div class="b l" style="left:1858px;top:749px;width:61px;background:#b0be50;">m</div>
<div class="b" style="left:1920px;top:749px;width:1px;background:#8844bb;"></div>
<div class="b" style="left:1952px;top:749px;width:19px;background:#b0be50;"></div>
<div class="b l" style="left:616px;top:783px;width:1189px;background:#77be6c;">Xt</div>
<div class="b" style="left:1806px;top:783px;width:33px;background:#77be6c;"></div>
<div class="b" style="left:1840px;top:783px;width:15px;background:#77be6c;"></div>
<div class="b" style="left:1856px;top:783px;width:1px;background:#8b6f22;"></div>
<div class="b l" style="left:1858px;top:783px;width:61px;background:#77be6c;">Xt</div>
<div class="b" style="left:1952px;top:783px;width:19px;background:#77be6c;"></div>
<div class="b l" style="left:616px;top:817px;width:1189px;background:#b0be50;">m</div>
<div class="b" style="left:1806px;top:817px;width:33px;background:#8844bb;"></div>
<div class="b" style="left:1840px;top:817px;width:15px;background:#b0be50;"></div>
<div class="b l" style="left:1858px;top:817px;width:61px;background:#b0be50;">m</div>
<div class="b" style="left:1952px;top:817px;width:19px;background:#b0be50;"></div>
<div class="b l" style="left:616px;top:851px;width:1189px;background:#6cb083;color:#dde4ee">$e</div>
<div class="b" style="left:1811px;top:851px;width:28px;background:#8844bb;"></div>
<div class="b" style="left:1840px;top:851px;width:15px;background:#77be6c;"></div>
<div class="b" style="left:1858px;top:851px;width:25px;background:#b0be50;"></div>
<div class="b" style="left:1884px;top:851px;width:35px;background:#77be6c;"></div>
<div class="b" style="left:1920px;top:851px;width:1px;background:#8844bb;"></div>
<div class="b" style="left:1952px;top:851px;width:19px;background:#77be6c;"></div>
<div class="b l" style="left:616px;top:885px;width:1189px;background:#77be6c;">mt</div>
<div class="b" style="left:1807px;top:885px;width:32px;background:#77be6c;"></div>
<div class="b" style="left:1840px;top:885px;width:15px;background:#77be6c;"></div>
<div class="b" style="left:1858px;top:885px;width:25px;background:#77be6c;"></div>
<div class="b" style="left:1884px;top:885px;width:17px;background:#8b6f22;"></div>
<div class="b" style="left:1904px;top:885px;width:15px;background:#77be6c;"></div>
<div class="b" style="left:1952px;top:885px;width:19px;background:#77be6c;"></div>
<div class="b" style="left:616px;top:919px;width:1px;background:#8b6f22;"></div>
<div class="b l" style="left:618px;top:919px;width:1187px;background:#8b6f22;">appendChild</div>
<div class="b r" style="left:1808px;top:919px;width:31px;background:#7a5eea;"></div>
<div class="b" style="left:1840px;top:919px;width:3px;background:#8b6f22;"></div>
<div class="b" style="left:1845px;top:919px;width:3px;background:#8b6f22;"></div>
<div class="b" style="left:1849px;top:919px;width:1px;background:#7a5eea;"></div>
<div class="b" style="left:1851px;top:919px;width:4px;background:#8b6f22;"></div>
<div class="b" style="left:1858px;top:919px;width:25px;background:#b0be50;"></div>
<div class="b" style="left:1884px;top:919px;width:17px;background:#77be6c;"></div>
<div class="b" style="left:1904px;top:919px;width:15px;background:#8b6f22;"></div>
<div class="b" style="left:1952px;top:919px;width:19px;background:#8b6f22;"></div>
<div class="b" style="left:618px;top:953px;width:1px;background:#8b6f22;"></div>
<div class="b r l" style="left:624px;top:953px;width:1181px;background:#7a5eea;">Layout</div>
<div class="b" style="left:1806px;top:953px;width:1px;background:#7a5eea;"></div>
<div class="b" style="left:1842px;top:953px;width:1px;background:#8b6f22;"></div>
<div class="b" style="left:1845px;top:953px;width:1px;background:#8b6f22;"></div>
<div class="b r" style="left:1849px;top:953px;width:6px;background:#7a5eea;"></div>
<div class="b" style="left:1858px;top:953px;width:25px;background:#b0be50;"></div>
<div class="b" style="left:1905px;top:953px;width:1px;background:#8b6f22;"></div>
<div class="b" style="left:1908px;top:953px;width:1px;background:#8b6f22;"></div>
<div class="b r" style="left:1912px;top:953px;width:6px;background:#7a5eea;"></div>
<div class="b" style="left:1954px;top:953px;width:1px;background:#8b6f22;"></div>
<div class="b" style="left:1957px;top:953px;width:1px;background:#8b6f22;"></div>
<div class="b r" style="left:1959px;top:953px;width:14px;background:#7a5eea;"></div>
<div class="b" style="left:624px;top:987px;width:1px;background:#8b6f22;"></div>
<div class="b" style="left:696px;top:987px;width:27px;background:#8b6f22;"></div>
<div class="b" style="left:1660px;top:987px;width:31px;background:#8b6f22;"></div>
<div class="b" style="left:1850px;top:987px;width:1px;background:#8b6f22;"></div>
<div class="b" style="left:1858px;top:987px;width:25px;background:#b0be50;"></div>
<div class="b" style="left:1912px;top:987px;width:1px;background:#8b6f22;"></div>
<div class="b" style="left:1960px;top:987px;width:1px;background:#8b6f22;"></div>
<div class="b r" style="left:1858px;top:1021px;width:25px;background:#7a5eea;"></div>
<div class="b" style="left:1973px;top:749px;width:1px;background:#77be6c;"></div>
<div class="b" style="left:1976px;top:749px;width:1px;background:#7a5eea;"></div>
<div class="b" style="left:1979px;top:749px;width:1px;background:#7a5eea;"></div>
<div class="b" style="left:1982px;top:749px;width:1px;background:#77be6c;"></div>
<div class="b" style="left:1985px;top:749px;width:1px;background:#8b6f22;"></div>
<div class="b" style="left:1988px;top:749px;width:1px;background:#7a5eea;"></div>
<div class="b" style="left:1991px;top:749px;width:1px;background:#b0be50;"></div>
<div class="b" style="left:1994px;top:749px;width:1px;background:#7a5eea;"></div>
<div class="b" style="left:1973px;top:783px;width:1px;background:#8844bb;"></div>
<div class="b" style="left:1976px;top:783px;width:1px;background:#7a5eea;"></div>
<div class="b" style="left:1979px;top:783px;width:1px;background:#8844bb;"></div>
<div class="b" style="left:1982px;top:783px;width:1px;background:#b0be50;"></div>
<div class="b" style="left:1985px;top:783px;width:1px;background:#8b6f22;"></div>
<div class="b" style="left:1988px;top:783px;width:1px;background:#7a5eea;"></div>
<div class="b" style="left:1991px;top:783px;width:1px;background:#77be6c;"></div>
<div class="b" style="left:1994px;top:783px;width:1px;background:#77be6c;"></div>
<div class="b" style="left:1973px;top:817px;width:1px;background:#b0be50;"></div>
<div class="b" style="left:1976px;top:817px;width:1px;background:#7a5eea;"></div>
<div class="b" style="left:1979px;top:817px;width:1px;background:#7a5eea;"></div>
<div class="b" style="left:1982px;top:817px;width:1px;background:#b0be50;"></div>
<div class="b" style="left:1985px;top:817px;width:1px;background:#b0be50;"></div>
<div class="b" style="left:1988px;top:817px;width:1px;background:#77be6c;"></div>
<div class="b" style="left:1991px;top:817px;width:1px;background:#77be6c;"></div>
<div class="b" style="left:1994px;top:817px;width:1px;background:#77be6c;"></div>
<div class="b" style="left:1973px;top:851px;width:1px;background:#7a5eea;"></div>
<div class="b" style="left:1976px;top:851px;width:1px;background:#b0be50;"></div>
<div class="b" style="left:1979px;top:851px;width:1px;background:#8844bb;"></div>
<div class="b" style="left:1982px;top:851px;width:1px;background:#8844bb;"></div>
<div class="b" style="left:1985px;top:851px;width:1px;background:#77be6c;"></div>
<div class="b" style="left:1988px;top:851px;width:1px;background:#7a5eea;"></div>
<div class="b" style="left:1991px;top:851px;width:1px;background:#8844bb;"></div>
<div class="b" style="left:1994px;top:851px;width:1px;background:#8b6f22;"></div>
<div class="b" style="left:1973px;top:885px;width:1px;background:#8844bb;"></div>
<div class="b" style="left:1976px;top:885px;width:1px;background:#8b6f22;"></div>
<div class="b" style="left:1979px;top:885px;width:1px;background:#b0be50;"></div>
<div class="b" style="left:1982px;top:885px;width:1px;background:#7a5eea;"></div>
<div class="b" style="left:1985px;top:885px;width:1px;background:#b0be50;"></div>
<div class="b" style="left:1988px;top:885px;width:1px;background:#b0be50;"></div>
<div class="b" style="left:1991px;top:885px;width:1px;background:#b0be50;"></div>
<div class="b" style="left:1994px;top:885px;width:1px;background:#7a5eea;"></div>
<div class="b" style="left:1973px;top:919px;width:1px;background:#b0be50;"></div>
<div class="b" style="left:1976px;top:919px;width:1px;background:#77be6c;"></div>
<div class="b" style="left:1979px;top:919px;width:1px;background:#8b6f22;"></div>
<div class="b" style="left:1982px;top:919px;width:1px;background:#8844bb;"></div>
<div class="b" style="left:1985px;top:919px;width:1px;background:#8844bb;"></div>
<div class="b" style="left:1988px;top:919px;width:1px;background:#77be6c;"></div>
<div class="b" style="left:1991px;top:919px;width:1px;background:#b0be50;"></div>
<div class="b" style="left:1994px;top:919px;width:1px;background:#77be6c;"></div>
<div class="b" style="left:1975px;top:953px;width:1px;background:#8b6f22;"></div>
<div class="b" style="left:1978px;top:953px;width:1px;background:#b0be50;"></div>
<div class="b" style="left:1981px;top:953px;width:1px;background:#8b6f22;"></div>
<div class="b" style="left:1984px;top:953px;width:1px;background:#b0be50;"></div>
<div class="b" style="left:1987px;top:953px;width:1px;background:#7a5eea;"></div>
<div class="b" style="left:1975px;top:987px;width:1px;background:#b0be50;"></div>
<div class="b" style="left:1978px;top:987px;width:1px;background:#7a5eea;"></div>
<div class="b" style="left:1981px;top:987px;width:1px;background:#8b6f22;"></div>
<div class="b" style="left:1984px;top:987px;width:1px;background:#7a5eea;"></div>
<div class="b" style="left:1987px;top:987px;width:1px;background:#7a5eea;"></div>
<div class="b" style="left:1975px;top:1021px;width:1px;background:#b0be50;"></div>
<div class="b" style="left:1978px;top:1021px;width:1px;background:#7a5eea;"></div>
<div class="b" style="left:1981px;top:1021px;width:1px;background:#77be6c;"></div>
<div class="b" style="left:1984px;top:1021px;width:1px;background:#8b6f22;"></div>
<div class="b" style="left:1987px;top:1021px;width:1px;background:#8844bb;"></div>
<div style="left:96.5px;top:205px;width:2px;height:823px;background:rgba(255,255,255,0.12);"></div>
<div style="left:268.5px;top:205px;width:2px;height:823px;background:rgba(255,255,255,0.12);"></div>
<div style="left:441.5px;top:205px;width:2px;height:823px;background:rgba(255,255,255,0.12);"></div>
<div style="left:613.5px;top:205px;width:2px;height:823px;background:rgba(255,255,255,0.12);"></div>
<div style="left:785.5px;top:205px;width:2px;height:823px;background:rgba(255,255,255,0.12);"></div>
<div style="left:957.5px;top:205px;width:2px;height:823px;background:rgba(255,255,255,0.12);"></div>
<div style="left:1129.5px;top:205px;width:2px;height:823px;background:rgba(255,255,255,0.12);"></div>
<div style="left:1301.5px;top:205px;width:2px;height:823px;background:rgba(255,255,255,0.12);"></div>
<div style="left:1473.5px;top:205px;width:2px;height:823px;background:rgba(255,255,255,0.12);"></div>
<div style="left:1645.5px;top:205px;width:2px;height:823px;background:rgba(255,255,255,0.12);"></div>
<div style="left:1817.5px;top:205px;width:2px;height:823px;background:rgba(255,255,255,0.12);"></div>
<div style="left:1989.5px;top:205px;width:2px;height:823px;background:rgba(255,255,255,0.12);"></div>
<div style="left:2161.5px;top:205px;width:2px;height:823px;background:rgba(255,255,255,0.12);"></div>
<div style="left:2334.5px;top:205px;width:2px;height:823px;background:rgba(255,255,255,0.12);"></div>
<div style="left:2506.5px;top:205px;width:2px;height:823px;background:rgba(255,255,255,0.12);"></div>
<div style="left:2678.5px;top:205px;width:2px;height:823px;background:rgba(255,255,255,0.12);"></div>
<div style="left:2850.5px;top:205px;width:2px;height:823px;background:rgba(255,255,255,0.12);"></div>
<div style="left:612px;top:847px;width:1199px;height:40px;border:4px solid #de8888;box-sizing:border-box;background:transparent"></div>
<div style="left:1064px;top:198px;width:4px;height:830px;background:#f2c443;"></div>
<div style="left:1082px;top:880px;width:195px;height:49px;background:rgba(255,255,255,0.2);"></div>
<div style="left:1084px;top:882px;width:191px;height:45px;background:#232428;box-shadow:0 2px 6px rgba(0,0,0,0.4)"></div>
<div class="t" style="left:1100px;top:890px;font-size:24px;line-height:30px;color:#9dd190">692.22 ms</div>
<div class="t" style="left:1223px;top:890px;font-size:24px;line-height:30px;color:#ffffff">$e</div>
<div style="left:2858px;top:205px;width:22px;height:823px;background:#2b2b2b;"></div>
<div style="left:2860px;top:301px;width:15px;height:310px;background:#3c3c3c;border-radius:8px"></div>
</body></html>
